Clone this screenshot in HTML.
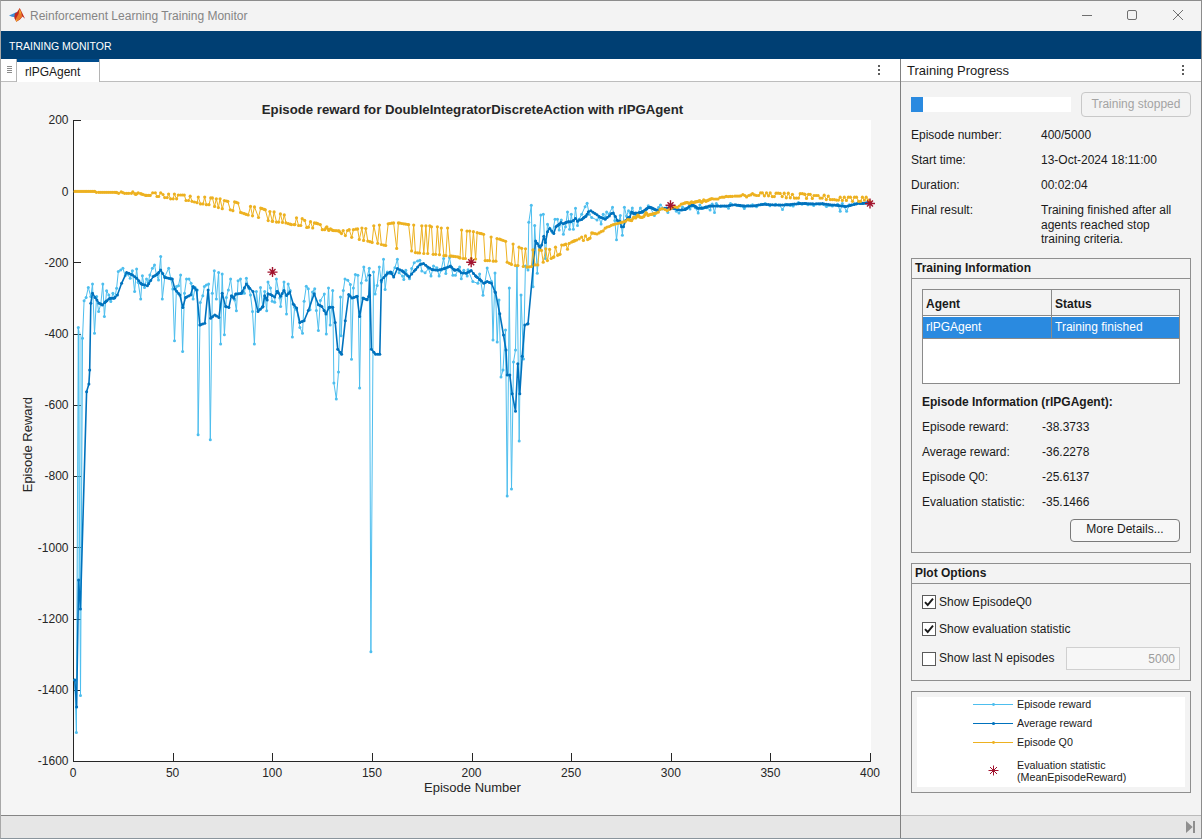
<!DOCTYPE html>
<html><head><meta charset="utf-8">
<style>
*{margin:0;padding:0;box-sizing:border-box}
html,body{width:1202px;height:839px;overflow:hidden;background:#f3f3f3;font-family:"Liberation Sans",sans-serif;color:#1a1a1a}
.a{position:absolute}
.t{position:absolute;white-space:nowrap;font-size:12px;line-height:14px}
</style></head><body>
<!-- window border -->
<div class="a" style="left:0;top:0;width:1202px;height:839px;border:1px solid #8c8c8c;border-left:1px solid #a8a8a8;border-bottom-color:#8a949c"></div>
<!-- title bar -->
<div class="a" style="left:1px;top:1px;width:1200px;height:30px;background:#f3f3f3"></div>
<svg class="a" style="left:6px;top:4px" width="24" height="24" viewBox="0 0 24 24">
<path d="M3 11.4L7.5 9.6L10.5 8L12 9.5L9.5 13.2L6 12.8Z" fill="#3c8fd8"/>
<path d="M8.8 9.5L11 8.2L13.7 4L16 8.5L19 14.8L16.5 12.5L14 15.5L10.3 17.7L8.3 14Z" fill="#c0281e"/>
<path d="M13.7 4.5L15.4 8.5L16.2 12.5L13.5 15.5L10.3 17.7L10 14.5L12.5 10Z" fill="#e8772a"/>
<path d="M13.8 5.5L14.8 9L13.9 10L13.4 7Z" fill="#f2c12e"/>
<path d="M10.3 17.7L9.8 15.8L11.5 15.3Z" fill="#f2c12e"/>
</svg>
<div class="t" style="left:30px;top:9px;font-size:12px;color:#858585">Reinforcement Learning Training Monitor</div>
<!-- window controls -->
<div class="a" style="left:1082px;top:15px;width:10px;height:1px;background:#6f6f6f"></div>
<div class="a" style="left:1127px;top:10px;width:10px;height:10px;border:1px solid #6f6f6f;border-radius:2px"></div>
<svg class="a" style="left:1172px;top:9px" width="12" height="12" viewBox="0 0 12 12"><path d="M1 1L11 11M11 1L1 11" stroke="#6f6f6f" stroke-width="1"/></svg>
<!-- blue toolstrip -->
<div class="a" style="left:1px;top:31px;width:1200px;height:28px;background:#003f73"></div>
<div class="t" style="left:9px;top:39px;font-size:10.5px;color:#fff">TRAINING MONITOR</div>
<!-- tab strip -->
<div class="a" style="left:1px;top:59px;width:899px;height:23px;background:#fff;border-bottom:1px solid #bdbdbd"></div>
<div class="a" style="left:16px;top:59px;width:1px;height:23px;background:#b4b4b4"></div>
<div class="a" style="left:17px;top:59px;width:82px;height:23px;background:#fff;border-top:3px solid #004c8c"></div>
<div class="a" style="left:99px;top:59px;width:1px;height:23px;background:#b4b4b4"></div>
<div class="t" style="left:25px;top:65px;color:#1a1a1a">rlPGAgent</div>
<!-- figure area -->
<div class="a" style="left:1px;top:82px;width:899px;height:733px;background:#f5f5f5"></div>
<svg class="a" style="left:0;top:0" width="900" height="815" viewBox="0 0 900 815">
<rect x="73" y="120" width="798" height="641" fill="#fff"/>
<text x="472.5" y="114" text-anchor="middle" font-family="Liberation Sans" font-weight="700" font-size="13.2" fill="#262626">Episode reward for DoubleIntegratorDiscreteAction with rlPGAgent</text>
<path d="M73.5,120V761.5H871" stroke="#262626" stroke-width="1" fill="none"/>
<path d="M73,120.5h8M73,191.5h8M73,262.5h8M73,334.5h8M73,405.5h8M73,476.5h8M73,547.5h8M73,619.5h8M73,690.5h8M73,761.5h8M73.5,761V753M173.5,761V753M272.5,761V753M372.5,761V753M472.5,761V753M571.5,761V753M671.5,761V753M770.5,761V753M870.5,761V753" stroke="#262626" stroke-width="1" fill="none"/>
<polygon points="77.5,600 78.3,327 82.5,338 81.2,600" fill="#4dbeee" opacity="0.45"/>
<polyline points="74.8,680.0 76.4,732.6 78.3,327.4 80.5,695.5 82.5,338.2 84.1,300.7 86.1,297.4 88.3,287.4 90.8,296.6 92.5,284.1 94.5,333.2 96.6,296.6 98.6,311.5 100.8,304.1 102.8,284.1 104.4,316.5 106.6,290.7 108.8,294.9 110.8,301.6 112.9,293.2 114.9,297.4 116.6,288.3 118.3,271.6 120.7,270.0 122.9,268.3 125.2,275.8 127.4,274.1 130.2,278.3 132.4,270.8 134.6,291.6 136.6,269.1 138.2,282.4 140.7,299.1 142.4,275.8 144.5,287.4 146.5,279.1 148.2,282.4 149.9,274.9 152.4,268.3 154.5,265.0 156.5,274.9 158.5,279.9 160.7,256.6 162.3,299.1 164.8,276.6 168.7,268.3 170.7,278.3 172.8,289.1 174.5,340.7 176.5,286.6 178.5,285.8 180.6,274.9 182.6,351.5 184.5,293.2 186.5,279.1 189.0,279.1 191.1,283.3 193.1,299.1 195.1,287.4 197.3,289.9 198.1,434.8 200.3,302.4 202.8,295.7 204.4,286.6 206.4,284.9 208.6,284.1 210.3,439.8 212.3,293.2 214.3,270.8 216.4,299.1 218.6,272.4 220.6,344.0 222.2,274.1 224.4,334.8 226.4,297.4 228.4,289.9 230.6,279.1 232.7,296.6 234.7,299.9 236.4,310.7 238.1,280.8 240.5,279.1 242.2,293.2 244.4,293.2 246.4,278.3 248.9,288.3 250.5,294.9 252.5,311.5 254.4,344.0 256.4,291.6 258.5,309.9 260.5,287.4 262.7,306.6 264.7,291.6 266.7,310.7 268.0,282.0 270.5,287.9 272.2,301.3 274.7,302.2 276.4,279.0 279.8,298.0 280.6,306.4 284.0,282.0 286.5,313.9 288.2,284.0 290.2,290.4 292.4,337.1 294.6,307.2 296.6,309.7 299.9,327.4 302.5,333.3 304.1,301.3 306.3,286.2 308.3,288.7 310.0,309.7 312.5,292.1 314.7,288.7 316.4,310.6 318.4,330.4 320.4,300.5 324.3,294.1 326.3,334.1 328.5,287.9 330.2,324.9 332.7,290.4 333.9,383.0 336.3,399.0 338.5,372.0 340.5,297.0 341.1,335.8 343.3,290.4 345.0,279.0 347.8,280.3 350.4,284.5 351.5,359.2 353.4,287.9 355.4,274.5 357.9,275.3 359.6,387.9 361.3,282.9 363.8,266.9 366.3,280.3 369.3,268.2 370.9,651.8 373.5,271.9 375.1,294.1 377.2,285.4 379.3,266.9 381.4,282.0 383.5,259.3 385.1,289.6 387.3,271.9 389.8,273.6 392.4,272.8 394.9,267.7 397.4,259.3 399.1,272.8 402.5,276.1 403.8,279.5 405.8,270.3 409.5,278.7 411.7,268.6 414.2,262.7 417.6,261.0 419.8,260.2 421.8,271.1 425.1,272.8 428.5,268.6 431.0,276.1 433.5,266.1 436.9,267.7 439.1,276.1 441.1,270.3 443.6,258.5 445.8,273.6 449.5,257.6 452.9,275.3 455.4,275.3 459.6,266.9 461.3,278.7 463.8,270.3 467.2,276.1 468.0,269.8 472.8,281.6 477.9,283.3 479.6,274.0 483.0,295.2 487.2,268.1 491.5,281.6 493.0,340.0 495.0,273.0 497.2,342.0 499.0,300.0 501.0,377.0 503.0,370.0 505.5,330.0 507.2,496.0 509.3,288.0 511.5,489.0 513.5,362.0 515.5,350.0 517.0,266.0 519.2,441.0 521.0,295.0 523.5,359.0 525.4,266.0 528.0,270.0 528.8,222.2 531.3,205.3 533.0,286.7 534.7,225.6 537.3,273.2 539.0,246.0 540.8,215.0 543.3,214.2 545.4,258.4 547.5,224.2 550.0,228.4 552.5,232.5 555.0,219.2 557.5,219.2 559.2,230.0 561.3,220.0 563.4,234.2 565.5,226.7 567.5,212.1 569.6,229.2 571.3,214.2 573.4,229.2 575.5,208.3 577.5,225.4 579.2,219.2 581.7,214.2 585.1,206.7 587.1,203.3 589.2,214.2 591.7,217.5 597.0,220.0 599.1,217.4 601.1,224.1 603.2,214.2 605.2,218.3 606.6,211.9 609.0,213.9 612.5,207.2 614.8,220.6 616.5,239.8 618.3,223.0 620.3,215.4 622.4,235.2 624.4,207.2 626.5,216.0 628.5,210.7 630.2,213.1 632.3,208.1 634.6,214.2 636.4,215.4 640.4,208.1 642.5,212.5 646.3,209.0 648.3,205.8 650.3,207.8 654.4,215.4 658.5,207.5 660.5,204.9 667.9,212.4 670.8,207.7 673.7,208.3 676.4,211.2 679.0,213.0 682.5,207.1 686.5,208.3 690.0,208.9 692.4,206.0 695.3,207.7 698.2,213.0 699.9,205.1 703.4,208.3 706.9,207.7 710.1,210.0 712.2,203.9 714.5,212.4 716.3,203.6 720.3,206.5 723.8,206.0 728.5,208.3 730.5,203.6 737.3,205.4 740.8,206.0 744.3,208.6 747.8,205.4 752.5,204.8 756.5,206.8 761.2,204.2 765.3,203.6 769.9,205.7 775.8,204.2 779.3,205.1 782.5,209.5 785.7,204.2 790.3,205.4 793.2,206.0 798.5,202.5 802.0,204.2 807.9,204.8 813.7,205.4 819.6,204.2 826.5,206.5 832.4,206.0 837.6,204.2 840.2,211.2 842.3,203.6 846.6,211.2 849.3,204.8 854.5,203.6 860.3,203.1 866.2,202.5 870.2,203.1" fill="none" stroke="#4dbeee" stroke-width="1.0" stroke-linejoin="round"/>
<g fill="#4dbeee"><circle cx="74.8" cy="680.0" r="1.5"/><circle cx="76.4" cy="732.6" r="1.5"/><circle cx="78.3" cy="327.4" r="1.5"/><circle cx="80.5" cy="695.5" r="1.5"/><circle cx="82.5" cy="338.2" r="1.5"/><circle cx="84.1" cy="300.7" r="1.5"/><circle cx="86.1" cy="297.4" r="1.5"/><circle cx="88.3" cy="287.4" r="1.5"/><circle cx="90.8" cy="296.6" r="1.5"/><circle cx="92.5" cy="284.1" r="1.5"/><circle cx="94.5" cy="333.2" r="1.5"/><circle cx="96.6" cy="296.6" r="1.5"/><circle cx="98.6" cy="311.5" r="1.5"/><circle cx="100.8" cy="304.1" r="1.5"/><circle cx="102.8" cy="284.1" r="1.5"/><circle cx="104.4" cy="316.5" r="1.5"/><circle cx="106.6" cy="290.7" r="1.5"/><circle cx="108.8" cy="294.9" r="1.5"/><circle cx="110.8" cy="301.6" r="1.5"/><circle cx="112.9" cy="293.2" r="1.5"/><circle cx="114.9" cy="297.4" r="1.5"/><circle cx="116.6" cy="288.3" r="1.5"/><circle cx="118.3" cy="271.6" r="1.5"/><circle cx="120.7" cy="270.0" r="1.5"/><circle cx="122.9" cy="268.3" r="1.5"/><circle cx="125.2" cy="275.8" r="1.5"/><circle cx="127.4" cy="274.1" r="1.5"/><circle cx="130.2" cy="278.3" r="1.5"/><circle cx="132.4" cy="270.8" r="1.5"/><circle cx="134.6" cy="291.6" r="1.5"/><circle cx="136.6" cy="269.1" r="1.5"/><circle cx="138.2" cy="282.4" r="1.5"/><circle cx="140.7" cy="299.1" r="1.5"/><circle cx="142.4" cy="275.8" r="1.5"/><circle cx="144.5" cy="287.4" r="1.5"/><circle cx="146.5" cy="279.1" r="1.5"/><circle cx="148.2" cy="282.4" r="1.5"/><circle cx="149.9" cy="274.9" r="1.5"/><circle cx="152.4" cy="268.3" r="1.5"/><circle cx="154.5" cy="265.0" r="1.5"/><circle cx="156.5" cy="274.9" r="1.5"/><circle cx="158.5" cy="279.9" r="1.5"/><circle cx="160.7" cy="256.6" r="1.5"/><circle cx="162.3" cy="299.1" r="1.5"/><circle cx="164.8" cy="276.6" r="1.5"/><circle cx="168.7" cy="268.3" r="1.5"/><circle cx="170.7" cy="278.3" r="1.5"/><circle cx="172.8" cy="289.1" r="1.5"/><circle cx="174.5" cy="340.7" r="1.5"/><circle cx="176.5" cy="286.6" r="1.5"/><circle cx="178.5" cy="285.8" r="1.5"/><circle cx="180.6" cy="274.9" r="1.5"/><circle cx="182.6" cy="351.5" r="1.5"/><circle cx="184.5" cy="293.2" r="1.5"/><circle cx="186.5" cy="279.1" r="1.5"/><circle cx="189.0" cy="279.1" r="1.5"/><circle cx="191.1" cy="283.3" r="1.5"/><circle cx="193.1" cy="299.1" r="1.5"/><circle cx="195.1" cy="287.4" r="1.5"/><circle cx="197.3" cy="289.9" r="1.5"/><circle cx="198.1" cy="434.8" r="1.5"/><circle cx="200.3" cy="302.4" r="1.5"/><circle cx="202.8" cy="295.7" r="1.5"/><circle cx="204.4" cy="286.6" r="1.5"/><circle cx="206.4" cy="284.9" r="1.5"/><circle cx="208.6" cy="284.1" r="1.5"/><circle cx="210.3" cy="439.8" r="1.5"/><circle cx="212.3" cy="293.2" r="1.5"/><circle cx="214.3" cy="270.8" r="1.5"/><circle cx="216.4" cy="299.1" r="1.5"/><circle cx="218.6" cy="272.4" r="1.5"/><circle cx="220.6" cy="344.0" r="1.5"/><circle cx="222.2" cy="274.1" r="1.5"/><circle cx="224.4" cy="334.8" r="1.5"/><circle cx="226.4" cy="297.4" r="1.5"/><circle cx="228.4" cy="289.9" r="1.5"/><circle cx="230.6" cy="279.1" r="1.5"/><circle cx="232.7" cy="296.6" r="1.5"/><circle cx="234.7" cy="299.9" r="1.5"/><circle cx="236.4" cy="310.7" r="1.5"/><circle cx="238.1" cy="280.8" r="1.5"/><circle cx="240.5" cy="279.1" r="1.5"/><circle cx="242.2" cy="293.2" r="1.5"/><circle cx="244.4" cy="293.2" r="1.5"/><circle cx="246.4" cy="278.3" r="1.5"/><circle cx="248.9" cy="288.3" r="1.5"/><circle cx="250.5" cy="294.9" r="1.5"/><circle cx="252.5" cy="311.5" r="1.5"/><circle cx="254.4" cy="344.0" r="1.5"/><circle cx="256.4" cy="291.6" r="1.5"/><circle cx="258.5" cy="309.9" r="1.5"/><circle cx="260.5" cy="287.4" r="1.5"/><circle cx="262.7" cy="306.6" r="1.5"/><circle cx="264.7" cy="291.6" r="1.5"/><circle cx="266.7" cy="310.7" r="1.5"/><circle cx="268.0" cy="282.0" r="1.5"/><circle cx="270.5" cy="287.9" r="1.5"/><circle cx="272.2" cy="301.3" r="1.5"/><circle cx="274.7" cy="302.2" r="1.5"/><circle cx="276.4" cy="279.0" r="1.5"/><circle cx="279.8" cy="298.0" r="1.5"/><circle cx="280.6" cy="306.4" r="1.5"/><circle cx="284.0" cy="282.0" r="1.5"/><circle cx="286.5" cy="313.9" r="1.5"/><circle cx="288.2" cy="284.0" r="1.5"/><circle cx="290.2" cy="290.4" r="1.5"/><circle cx="292.4" cy="337.1" r="1.5"/><circle cx="294.6" cy="307.2" r="1.5"/><circle cx="296.6" cy="309.7" r="1.5"/><circle cx="299.9" cy="327.4" r="1.5"/><circle cx="302.5" cy="333.3" r="1.5"/><circle cx="304.1" cy="301.3" r="1.5"/><circle cx="306.3" cy="286.2" r="1.5"/><circle cx="308.3" cy="288.7" r="1.5"/><circle cx="310.0" cy="309.7" r="1.5"/><circle cx="312.5" cy="292.1" r="1.5"/><circle cx="314.7" cy="288.7" r="1.5"/><circle cx="316.4" cy="310.6" r="1.5"/><circle cx="318.4" cy="330.4" r="1.5"/><circle cx="320.4" cy="300.5" r="1.5"/><circle cx="324.3" cy="294.1" r="1.5"/><circle cx="326.3" cy="334.1" r="1.5"/><circle cx="328.5" cy="287.9" r="1.5"/><circle cx="330.2" cy="324.9" r="1.5"/><circle cx="332.7" cy="290.4" r="1.5"/><circle cx="333.9" cy="383.0" r="1.5"/><circle cx="336.3" cy="399.0" r="1.5"/><circle cx="338.5" cy="372.0" r="1.5"/><circle cx="340.5" cy="297.0" r="1.5"/><circle cx="341.1" cy="335.8" r="1.5"/><circle cx="343.3" cy="290.4" r="1.5"/><circle cx="345.0" cy="279.0" r="1.5"/><circle cx="347.8" cy="280.3" r="1.5"/><circle cx="350.4" cy="284.5" r="1.5"/><circle cx="351.5" cy="359.2" r="1.5"/><circle cx="353.4" cy="287.9" r="1.5"/><circle cx="355.4" cy="274.5" r="1.5"/><circle cx="357.9" cy="275.3" r="1.5"/><circle cx="359.6" cy="387.9" r="1.5"/><circle cx="361.3" cy="282.9" r="1.5"/><circle cx="363.8" cy="266.9" r="1.5"/><circle cx="366.3" cy="280.3" r="1.5"/><circle cx="369.3" cy="268.2" r="1.5"/><circle cx="370.9" cy="651.8" r="1.5"/><circle cx="373.5" cy="271.9" r="1.5"/><circle cx="375.1" cy="294.1" r="1.5"/><circle cx="377.2" cy="285.4" r="1.5"/><circle cx="379.3" cy="266.9" r="1.5"/><circle cx="381.4" cy="282.0" r="1.5"/><circle cx="383.5" cy="259.3" r="1.5"/><circle cx="385.1" cy="289.6" r="1.5"/><circle cx="387.3" cy="271.9" r="1.5"/><circle cx="389.8" cy="273.6" r="1.5"/><circle cx="392.4" cy="272.8" r="1.5"/><circle cx="394.9" cy="267.7" r="1.5"/><circle cx="397.4" cy="259.3" r="1.5"/><circle cx="399.1" cy="272.8" r="1.5"/><circle cx="402.5" cy="276.1" r="1.5"/><circle cx="403.8" cy="279.5" r="1.5"/><circle cx="405.8" cy="270.3" r="1.5"/><circle cx="409.5" cy="278.7" r="1.5"/><circle cx="411.7" cy="268.6" r="1.5"/><circle cx="414.2" cy="262.7" r="1.5"/><circle cx="417.6" cy="261.0" r="1.5"/><circle cx="419.8" cy="260.2" r="1.5"/><circle cx="421.8" cy="271.1" r="1.5"/><circle cx="425.1" cy="272.8" r="1.5"/><circle cx="428.5" cy="268.6" r="1.5"/><circle cx="431.0" cy="276.1" r="1.5"/><circle cx="433.5" cy="266.1" r="1.5"/><circle cx="436.9" cy="267.7" r="1.5"/><circle cx="439.1" cy="276.1" r="1.5"/><circle cx="441.1" cy="270.3" r="1.5"/><circle cx="443.6" cy="258.5" r="1.5"/><circle cx="445.8" cy="273.6" r="1.5"/><circle cx="449.5" cy="257.6" r="1.5"/><circle cx="452.9" cy="275.3" r="1.5"/><circle cx="455.4" cy="275.3" r="1.5"/><circle cx="459.6" cy="266.9" r="1.5"/><circle cx="461.3" cy="278.7" r="1.5"/><circle cx="463.8" cy="270.3" r="1.5"/><circle cx="467.2" cy="276.1" r="1.5"/><circle cx="468.0" cy="269.8" r="1.5"/><circle cx="472.8" cy="281.6" r="1.5"/><circle cx="477.9" cy="283.3" r="1.5"/><circle cx="479.6" cy="274.0" r="1.5"/><circle cx="483.0" cy="295.2" r="1.5"/><circle cx="487.2" cy="268.1" r="1.5"/><circle cx="491.5" cy="281.6" r="1.5"/><circle cx="493.0" cy="340.0" r="1.5"/><circle cx="495.0" cy="273.0" r="1.5"/><circle cx="497.2" cy="342.0" r="1.5"/><circle cx="499.0" cy="300.0" r="1.5"/><circle cx="501.0" cy="377.0" r="1.5"/><circle cx="503.0" cy="370.0" r="1.5"/><circle cx="505.5" cy="330.0" r="1.5"/><circle cx="507.2" cy="496.0" r="1.5"/><circle cx="509.3" cy="288.0" r="1.5"/><circle cx="511.5" cy="489.0" r="1.5"/><circle cx="513.5" cy="362.0" r="1.5"/><circle cx="515.5" cy="350.0" r="1.5"/><circle cx="517.0" cy="266.0" r="1.5"/><circle cx="519.2" cy="441.0" r="1.5"/><circle cx="521.0" cy="295.0" r="1.5"/><circle cx="523.5" cy="359.0" r="1.5"/><circle cx="525.4" cy="266.0" r="1.5"/><circle cx="528.0" cy="270.0" r="1.5"/><circle cx="528.8" cy="222.2" r="1.5"/><circle cx="531.3" cy="205.3" r="1.5"/><circle cx="533.0" cy="286.7" r="1.5"/><circle cx="534.7" cy="225.6" r="1.5"/><circle cx="537.3" cy="273.2" r="1.5"/><circle cx="539.0" cy="246.0" r="1.5"/><circle cx="540.8" cy="215.0" r="1.5"/><circle cx="543.3" cy="214.2" r="1.5"/><circle cx="545.4" cy="258.4" r="1.5"/><circle cx="547.5" cy="224.2" r="1.5"/><circle cx="550.0" cy="228.4" r="1.5"/><circle cx="552.5" cy="232.5" r="1.5"/><circle cx="555.0" cy="219.2" r="1.5"/><circle cx="557.5" cy="219.2" r="1.5"/><circle cx="559.2" cy="230.0" r="1.5"/><circle cx="561.3" cy="220.0" r="1.5"/><circle cx="563.4" cy="234.2" r="1.5"/><circle cx="565.5" cy="226.7" r="1.5"/><circle cx="567.5" cy="212.1" r="1.5"/><circle cx="569.6" cy="229.2" r="1.5"/><circle cx="571.3" cy="214.2" r="1.5"/><circle cx="573.4" cy="229.2" r="1.5"/><circle cx="575.5" cy="208.3" r="1.5"/><circle cx="577.5" cy="225.4" r="1.5"/><circle cx="579.2" cy="219.2" r="1.5"/><circle cx="581.7" cy="214.2" r="1.5"/><circle cx="585.1" cy="206.7" r="1.5"/><circle cx="587.1" cy="203.3" r="1.5"/><circle cx="589.2" cy="214.2" r="1.5"/><circle cx="591.7" cy="217.5" r="1.5"/><circle cx="597.0" cy="220.0" r="1.5"/><circle cx="599.1" cy="217.4" r="1.5"/><circle cx="601.1" cy="224.1" r="1.5"/><circle cx="603.2" cy="214.2" r="1.5"/><circle cx="605.2" cy="218.3" r="1.5"/><circle cx="606.6" cy="211.9" r="1.5"/><circle cx="609.0" cy="213.9" r="1.5"/><circle cx="612.5" cy="207.2" r="1.5"/><circle cx="614.8" cy="220.6" r="1.5"/><circle cx="616.5" cy="239.8" r="1.5"/><circle cx="618.3" cy="223.0" r="1.5"/><circle cx="620.3" cy="215.4" r="1.5"/><circle cx="622.4" cy="235.2" r="1.5"/><circle cx="624.4" cy="207.2" r="1.5"/><circle cx="626.5" cy="216.0" r="1.5"/><circle cx="628.5" cy="210.7" r="1.5"/><circle cx="630.2" cy="213.1" r="1.5"/><circle cx="632.3" cy="208.1" r="1.5"/><circle cx="634.6" cy="214.2" r="1.5"/><circle cx="636.4" cy="215.4" r="1.5"/><circle cx="640.4" cy="208.1" r="1.5"/><circle cx="642.5" cy="212.5" r="1.5"/><circle cx="646.3" cy="209.0" r="1.5"/><circle cx="648.3" cy="205.8" r="1.5"/><circle cx="650.3" cy="207.8" r="1.5"/><circle cx="654.4" cy="215.4" r="1.5"/><circle cx="658.5" cy="207.5" r="1.5"/><circle cx="660.5" cy="204.9" r="1.5"/><circle cx="667.9" cy="212.4" r="1.5"/><circle cx="670.8" cy="207.7" r="1.5"/><circle cx="673.7" cy="208.3" r="1.5"/><circle cx="676.4" cy="211.2" r="1.5"/><circle cx="679.0" cy="213.0" r="1.5"/><circle cx="682.5" cy="207.1" r="1.5"/><circle cx="686.5" cy="208.3" r="1.5"/><circle cx="690.0" cy="208.9" r="1.5"/><circle cx="692.4" cy="206.0" r="1.5"/><circle cx="695.3" cy="207.7" r="1.5"/><circle cx="698.2" cy="213.0" r="1.5"/><circle cx="699.9" cy="205.1" r="1.5"/><circle cx="703.4" cy="208.3" r="1.5"/><circle cx="706.9" cy="207.7" r="1.5"/><circle cx="710.1" cy="210.0" r="1.5"/><circle cx="712.2" cy="203.9" r="1.5"/><circle cx="714.5" cy="212.4" r="1.5"/><circle cx="716.3" cy="203.6" r="1.5"/><circle cx="720.3" cy="206.5" r="1.5"/><circle cx="723.8" cy="206.0" r="1.5"/><circle cx="728.5" cy="208.3" r="1.5"/><circle cx="730.5" cy="203.6" r="1.5"/><circle cx="737.3" cy="205.4" r="1.5"/><circle cx="740.8" cy="206.0" r="1.5"/><circle cx="744.3" cy="208.6" r="1.5"/><circle cx="747.8" cy="205.4" r="1.5"/><circle cx="752.5" cy="204.8" r="1.5"/><circle cx="756.5" cy="206.8" r="1.5"/><circle cx="761.2" cy="204.2" r="1.5"/><circle cx="765.3" cy="203.6" r="1.5"/><circle cx="769.9" cy="205.7" r="1.5"/><circle cx="775.8" cy="204.2" r="1.5"/><circle cx="779.3" cy="205.1" r="1.5"/><circle cx="782.5" cy="209.5" r="1.5"/><circle cx="785.7" cy="204.2" r="1.5"/><circle cx="790.3" cy="205.4" r="1.5"/><circle cx="793.2" cy="206.0" r="1.5"/><circle cx="798.5" cy="202.5" r="1.5"/><circle cx="802.0" cy="204.2" r="1.5"/><circle cx="807.9" cy="204.8" r="1.5"/><circle cx="813.7" cy="205.4" r="1.5"/><circle cx="819.6" cy="204.2" r="1.5"/><circle cx="826.5" cy="206.5" r="1.5"/><circle cx="832.4" cy="206.0" r="1.5"/><circle cx="837.6" cy="204.2" r="1.5"/><circle cx="840.2" cy="211.2" r="1.5"/><circle cx="842.3" cy="203.6" r="1.5"/><circle cx="846.6" cy="211.2" r="1.5"/><circle cx="849.3" cy="204.8" r="1.5"/><circle cx="854.5" cy="203.6" r="1.5"/><circle cx="860.3" cy="203.1" r="1.5"/><circle cx="866.2" cy="202.5" r="1.5"/><circle cx="870.2" cy="203.1" r="1.5"/></g>
<polyline points="74.8,680.0 76.6,707.0 78.6,580.0 80.4,609.0 86.6,391.7 88.9,384.0 89.7,370.0 90.8,303.2 92.5,293.2 95.0,297.4 99.1,303.2 102.4,304.9 105.8,301.6 109.9,298.2 114.1,298.2 117.4,294.9 121.6,283.3 126.6,272.4 132.4,274.9 136.6,278.3 141.5,284.1 147.4,285.8 153.2,276.6 157.4,274.1 160.7,270.0 164.8,277.4 172.3,279.1 174.8,289.1 179.8,294.9 182.8,307.4 185.6,297.4 190.6,294.9 193.1,286.6 196.5,289.9 199.8,324.9 204.8,323.2 208.1,289.9 210.6,318.2 214.8,314.9 218.9,317.4 222.2,293.2 225.6,306.6 228.9,307.4 231.4,295.7 233.9,298.2 235.6,294.1 241.4,293.2 246.4,284.1 249.7,288.3 253.0,291.6 258.0,311.5 263.0,306.6 264.7,295.7 267.2,299.9 268.0,293.8 270.5,294.6 274.7,297.1 277.2,291.3 280.6,296.3 284.0,290.4 286.5,295.5 289.8,292.1 293.2,303.9 296.6,308.1 299.9,322.4 304.1,320.7 308.3,310.6 314.2,293.8 318.4,304.7 321.8,306.4 326.0,313.9 329.3,307.2 332.7,307.2 335.2,322.4 337.7,349.2 341.6,354.3 345.3,320.7 348.7,294.6 352.0,298.0 357.1,296.3 359.6,316.5 363.0,298.0 367.2,299.7 368.8,296.3 369.7,275.3 371.4,349.2 375.6,354.3 379.8,354.3 381.4,280.3 387.3,273.6 390.7,271.9 393.7,277.0 397.4,268.6 402.5,271.1 409.2,277.0 414.2,271.1 420.1,264.4 423.5,263.5 427.7,266.9 431.9,269.4 437.7,270.3 444.5,268.6 450.4,266.1 454.6,270.3 457.9,269.4 461.3,272.8 466.0,273.2 471.1,270.6 476.2,276.6 480.4,280.0 483.8,283.3 487.2,281.6 491.5,283.3 494.9,291.8 495.5,292.5 499.8,313.8 503.5,335.0 506.0,350.0 507.2,375.0 509.8,375.0 512.2,393.8 515.5,411.2 517.8,363.8 519.8,393.8 522.2,356.2 524.8,325.0 528.0,323.8 535.6,240.9 539.0,246.0 540.0,249.2 541.7,245.0 543.8,236.3 545.4,242.5 547.5,231.7 549.6,228.4 551.7,230.9 553.8,233.4 555.9,226.7 558.4,225.0 560.9,222.5 563.4,223.8 565.9,222.5 568.4,221.7 570.9,221.7 573.4,220.4 575.5,218.4 577.5,221.3 579.6,220.0 581.7,219.6 583.8,217.5 585.9,216.3 588.4,211.7 590.9,210.8 597.0,214.8 599.1,216.5 601.1,217.4 603.2,218.3 605.2,219.2 607.2,217.4 609.3,216.0 611.3,213.6 613.3,213.1 615.4,216.5 617.4,220.6 619.5,220.9 621.5,226.7 623.5,226.7 625.6,220.6 627.6,218.0 629.7,217.1 631.7,211.9 633.7,213.6 635.8,213.1 637.8,213.3 639.8,212.5 641.9,211.9 643.9,211.0 646.0,209.3 648.0,207.8 650.0,207.2 652.1,208.1 654.1,209.0 656.2,210.1 658.2,210.4 660.2,209.0 662.3,208.7 665.0,208.3 669.1,207.7 673.2,208.3 677.2,209.5 681.3,210.0 685.4,209.5 689.5,206.3 691.5,204.8 693.5,205.4 695.6,206.5 697.6,208.3 701.7,208.3 705.8,207.1 709.8,206.0 713.9,206.0 718.0,206.0 722.1,206.0 726.2,206.0 730.2,205.4 735.0,204.8 739.7,205.4 743.7,206.0 752.5,206.0 764.1,204.2 775.8,205.1 787.4,204.8 799.1,203.6 805.0,203.6 813.7,203.9 822.5,203.6 828.3,204.5 834.1,205.1 839.9,205.7 845.8,206.5 851.6,205.1 857.4,203.6 863.2,203.3 870.2,203.1" fill="none" stroke="#0072bd" stroke-width="1.6" stroke-linejoin="round"/>
<g fill="#0072bd"><circle cx="74.8" cy="680.0" r="1.5"/><circle cx="76.6" cy="707.0" r="1.5"/><circle cx="78.6" cy="580.0" r="1.5"/><circle cx="80.4" cy="609.0" r="1.5"/><circle cx="86.6" cy="391.7" r="1.5"/><circle cx="88.9" cy="384.0" r="1.5"/><circle cx="89.7" cy="370.0" r="1.5"/><circle cx="90.8" cy="303.2" r="1.5"/><circle cx="92.5" cy="293.2" r="1.5"/><circle cx="95.0" cy="297.4" r="1.5"/><circle cx="99.1" cy="303.2" r="1.5"/><circle cx="102.4" cy="304.9" r="1.5"/><circle cx="105.8" cy="301.6" r="1.5"/><circle cx="109.9" cy="298.2" r="1.5"/><circle cx="114.1" cy="298.2" r="1.5"/><circle cx="117.4" cy="294.9" r="1.5"/><circle cx="121.6" cy="283.3" r="1.5"/><circle cx="126.6" cy="272.4" r="1.5"/><circle cx="132.4" cy="274.9" r="1.5"/><circle cx="136.6" cy="278.3" r="1.5"/><circle cx="141.5" cy="284.1" r="1.5"/><circle cx="147.4" cy="285.8" r="1.5"/><circle cx="153.2" cy="276.6" r="1.5"/><circle cx="157.4" cy="274.1" r="1.5"/><circle cx="160.7" cy="270.0" r="1.5"/><circle cx="164.8" cy="277.4" r="1.5"/><circle cx="172.3" cy="279.1" r="1.5"/><circle cx="174.8" cy="289.1" r="1.5"/><circle cx="179.8" cy="294.9" r="1.5"/><circle cx="182.8" cy="307.4" r="1.5"/><circle cx="185.6" cy="297.4" r="1.5"/><circle cx="190.6" cy="294.9" r="1.5"/><circle cx="193.1" cy="286.6" r="1.5"/><circle cx="196.5" cy="289.9" r="1.5"/><circle cx="199.8" cy="324.9" r="1.5"/><circle cx="204.8" cy="323.2" r="1.5"/><circle cx="208.1" cy="289.9" r="1.5"/><circle cx="210.6" cy="318.2" r="1.5"/><circle cx="214.8" cy="314.9" r="1.5"/><circle cx="218.9" cy="317.4" r="1.5"/><circle cx="222.2" cy="293.2" r="1.5"/><circle cx="225.6" cy="306.6" r="1.5"/><circle cx="228.9" cy="307.4" r="1.5"/><circle cx="231.4" cy="295.7" r="1.5"/><circle cx="233.9" cy="298.2" r="1.5"/><circle cx="235.6" cy="294.1" r="1.5"/><circle cx="241.4" cy="293.2" r="1.5"/><circle cx="246.4" cy="284.1" r="1.5"/><circle cx="249.7" cy="288.3" r="1.5"/><circle cx="253.0" cy="291.6" r="1.5"/><circle cx="258.0" cy="311.5" r="1.5"/><circle cx="263.0" cy="306.6" r="1.5"/><circle cx="264.7" cy="295.7" r="1.5"/><circle cx="267.2" cy="299.9" r="1.5"/><circle cx="268.0" cy="293.8" r="1.5"/><circle cx="270.5" cy="294.6" r="1.5"/><circle cx="274.7" cy="297.1" r="1.5"/><circle cx="277.2" cy="291.3" r="1.5"/><circle cx="280.6" cy="296.3" r="1.5"/><circle cx="284.0" cy="290.4" r="1.5"/><circle cx="286.5" cy="295.5" r="1.5"/><circle cx="289.8" cy="292.1" r="1.5"/><circle cx="293.2" cy="303.9" r="1.5"/><circle cx="296.6" cy="308.1" r="1.5"/><circle cx="299.9" cy="322.4" r="1.5"/><circle cx="304.1" cy="320.7" r="1.5"/><circle cx="308.3" cy="310.6" r="1.5"/><circle cx="314.2" cy="293.8" r="1.5"/><circle cx="318.4" cy="304.7" r="1.5"/><circle cx="321.8" cy="306.4" r="1.5"/><circle cx="326.0" cy="313.9" r="1.5"/><circle cx="329.3" cy="307.2" r="1.5"/><circle cx="332.7" cy="307.2" r="1.5"/><circle cx="335.2" cy="322.4" r="1.5"/><circle cx="337.7" cy="349.2" r="1.5"/><circle cx="341.6" cy="354.3" r="1.5"/><circle cx="345.3" cy="320.7" r="1.5"/><circle cx="348.7" cy="294.6" r="1.5"/><circle cx="352.0" cy="298.0" r="1.5"/><circle cx="357.1" cy="296.3" r="1.5"/><circle cx="359.6" cy="316.5" r="1.5"/><circle cx="363.0" cy="298.0" r="1.5"/><circle cx="367.2" cy="299.7" r="1.5"/><circle cx="368.8" cy="296.3" r="1.5"/><circle cx="369.7" cy="275.3" r="1.5"/><circle cx="371.4" cy="349.2" r="1.5"/><circle cx="375.6" cy="354.3" r="1.5"/><circle cx="379.8" cy="354.3" r="1.5"/><circle cx="381.4" cy="280.3" r="1.5"/><circle cx="387.3" cy="273.6" r="1.5"/><circle cx="390.7" cy="271.9" r="1.5"/><circle cx="393.7" cy="277.0" r="1.5"/><circle cx="397.4" cy="268.6" r="1.5"/><circle cx="402.5" cy="271.1" r="1.5"/><circle cx="409.2" cy="277.0" r="1.5"/><circle cx="414.2" cy="271.1" r="1.5"/><circle cx="420.1" cy="264.4" r="1.5"/><circle cx="423.5" cy="263.5" r="1.5"/><circle cx="427.7" cy="266.9" r="1.5"/><circle cx="431.9" cy="269.4" r="1.5"/><circle cx="437.7" cy="270.3" r="1.5"/><circle cx="444.5" cy="268.6" r="1.5"/><circle cx="450.4" cy="266.1" r="1.5"/><circle cx="454.6" cy="270.3" r="1.5"/><circle cx="457.9" cy="269.4" r="1.5"/><circle cx="461.3" cy="272.8" r="1.5"/><circle cx="466.0" cy="273.2" r="1.5"/><circle cx="471.1" cy="270.6" r="1.5"/><circle cx="476.2" cy="276.6" r="1.5"/><circle cx="480.4" cy="280.0" r="1.5"/><circle cx="483.8" cy="283.3" r="1.5"/><circle cx="487.2" cy="281.6" r="1.5"/><circle cx="491.5" cy="283.3" r="1.5"/><circle cx="494.9" cy="291.8" r="1.5"/><circle cx="495.5" cy="292.5" r="1.5"/><circle cx="499.8" cy="313.8" r="1.5"/><circle cx="503.5" cy="335.0" r="1.5"/><circle cx="506.0" cy="350.0" r="1.5"/><circle cx="507.2" cy="375.0" r="1.5"/><circle cx="509.8" cy="375.0" r="1.5"/><circle cx="512.2" cy="393.8" r="1.5"/><circle cx="515.5" cy="411.2" r="1.5"/><circle cx="517.8" cy="363.8" r="1.5"/><circle cx="519.8" cy="393.8" r="1.5"/><circle cx="522.2" cy="356.2" r="1.5"/><circle cx="524.8" cy="325.0" r="1.5"/><circle cx="528.0" cy="323.8" r="1.5"/><circle cx="535.6" cy="240.9" r="1.5"/><circle cx="539.0" cy="246.0" r="1.5"/><circle cx="540.0" cy="249.2" r="1.5"/><circle cx="541.7" cy="245.0" r="1.5"/><circle cx="543.8" cy="236.3" r="1.5"/><circle cx="545.4" cy="242.5" r="1.5"/><circle cx="547.5" cy="231.7" r="1.5"/><circle cx="549.6" cy="228.4" r="1.5"/><circle cx="551.7" cy="230.9" r="1.5"/><circle cx="553.8" cy="233.4" r="1.5"/><circle cx="555.9" cy="226.7" r="1.5"/><circle cx="558.4" cy="225.0" r="1.5"/><circle cx="560.9" cy="222.5" r="1.5"/><circle cx="563.4" cy="223.8" r="1.5"/><circle cx="565.9" cy="222.5" r="1.5"/><circle cx="568.4" cy="221.7" r="1.5"/><circle cx="570.9" cy="221.7" r="1.5"/><circle cx="573.4" cy="220.4" r="1.5"/><circle cx="575.5" cy="218.4" r="1.5"/><circle cx="577.5" cy="221.3" r="1.5"/><circle cx="579.6" cy="220.0" r="1.5"/><circle cx="581.7" cy="219.6" r="1.5"/><circle cx="583.8" cy="217.5" r="1.5"/><circle cx="585.9" cy="216.3" r="1.5"/><circle cx="588.4" cy="211.7" r="1.5"/><circle cx="590.9" cy="210.8" r="1.5"/><circle cx="597.0" cy="214.8" r="1.5"/><circle cx="599.1" cy="216.5" r="1.5"/><circle cx="601.1" cy="217.4" r="1.5"/><circle cx="603.2" cy="218.3" r="1.5"/><circle cx="605.2" cy="219.2" r="1.5"/><circle cx="607.2" cy="217.4" r="1.5"/><circle cx="609.3" cy="216.0" r="1.5"/><circle cx="611.3" cy="213.6" r="1.5"/><circle cx="613.3" cy="213.1" r="1.5"/><circle cx="615.4" cy="216.5" r="1.5"/><circle cx="617.4" cy="220.6" r="1.5"/><circle cx="619.5" cy="220.9" r="1.5"/><circle cx="621.5" cy="226.7" r="1.5"/><circle cx="623.5" cy="226.7" r="1.5"/><circle cx="625.6" cy="220.6" r="1.5"/><circle cx="627.6" cy="218.0" r="1.5"/><circle cx="629.7" cy="217.1" r="1.5"/><circle cx="631.7" cy="211.9" r="1.5"/><circle cx="633.7" cy="213.6" r="1.5"/><circle cx="635.8" cy="213.1" r="1.5"/><circle cx="637.8" cy="213.3" r="1.5"/><circle cx="639.8" cy="212.5" r="1.5"/><circle cx="641.9" cy="211.9" r="1.5"/><circle cx="643.9" cy="211.0" r="1.5"/><circle cx="646.0" cy="209.3" r="1.5"/><circle cx="648.0" cy="207.8" r="1.5"/><circle cx="650.0" cy="207.2" r="1.5"/><circle cx="652.1" cy="208.1" r="1.5"/><circle cx="654.1" cy="209.0" r="1.5"/><circle cx="656.2" cy="210.1" r="1.5"/><circle cx="658.2" cy="210.4" r="1.5"/><circle cx="660.2" cy="209.0" r="1.5"/><circle cx="662.3" cy="208.7" r="1.5"/><circle cx="665.0" cy="208.3" r="1.5"/><circle cx="669.1" cy="207.7" r="1.5"/><circle cx="673.2" cy="208.3" r="1.5"/><circle cx="677.2" cy="209.5" r="1.5"/><circle cx="681.3" cy="210.0" r="1.5"/><circle cx="685.4" cy="209.5" r="1.5"/><circle cx="689.5" cy="206.3" r="1.5"/><circle cx="691.5" cy="204.8" r="1.5"/><circle cx="693.5" cy="205.4" r="1.5"/><circle cx="695.6" cy="206.5" r="1.5"/><circle cx="697.6" cy="208.3" r="1.5"/><circle cx="701.7" cy="208.3" r="1.5"/><circle cx="705.8" cy="207.1" r="1.5"/><circle cx="709.8" cy="206.0" r="1.5"/><circle cx="713.9" cy="206.0" r="1.5"/><circle cx="718.0" cy="206.0" r="1.5"/><circle cx="722.1" cy="206.0" r="1.5"/><circle cx="726.2" cy="206.0" r="1.5"/><circle cx="730.2" cy="205.4" r="1.5"/><circle cx="735.0" cy="204.8" r="1.5"/><circle cx="739.7" cy="205.4" r="1.5"/><circle cx="743.7" cy="206.0" r="1.5"/><circle cx="752.5" cy="206.0" r="1.5"/><circle cx="764.1" cy="204.2" r="1.5"/><circle cx="775.8" cy="205.1" r="1.5"/><circle cx="787.4" cy="204.8" r="1.5"/><circle cx="799.1" cy="203.6" r="1.5"/><circle cx="805.0" cy="203.6" r="1.5"/><circle cx="813.7" cy="203.9" r="1.5"/><circle cx="822.5" cy="203.6" r="1.5"/><circle cx="828.3" cy="204.5" r="1.5"/><circle cx="834.1" cy="205.1" r="1.5"/><circle cx="839.9" cy="205.7" r="1.5"/><circle cx="845.8" cy="206.5" r="1.5"/><circle cx="851.6" cy="205.1" r="1.5"/><circle cx="857.4" cy="203.6" r="1.5"/><circle cx="863.2" cy="203.3" r="1.5"/><circle cx="870.2" cy="203.1" r="1.5"/><circle cx="96.9" cy="300.1" r="1.5"/><circle cx="100.9" cy="304.1" r="1.5"/><circle cx="104.9" cy="302.5" r="1.5"/><circle cx="106.9" cy="300.7" r="1.5"/><circle cx="108.9" cy="299.1" r="1.5"/><circle cx="110.9" cy="298.2" r="1.5"/><circle cx="112.8" cy="298.2" r="1.5"/><circle cx="114.8" cy="297.5" r="1.5"/><circle cx="128.8" cy="273.3" r="1.5"/><circle cx="130.8" cy="274.2" r="1.5"/><circle cx="134.8" cy="276.8" r="1.5"/><circle cx="138.8" cy="280.8" r="1.5"/><circle cx="140.7" cy="283.2" r="1.5"/><circle cx="142.7" cy="284.5" r="1.5"/><circle cx="144.7" cy="285.0" r="1.5"/><circle cx="148.7" cy="283.7" r="1.5"/><circle cx="150.7" cy="280.6" r="1.5"/><circle cx="154.7" cy="275.7" r="1.5"/><circle cx="156.7" cy="274.5" r="1.5"/><circle cx="158.7" cy="272.5" r="1.5"/><circle cx="162.7" cy="273.5" r="1.5"/><circle cx="166.6" cy="277.8" r="1.5"/><circle cx="168.6" cy="278.3" r="1.5"/><circle cx="170.6" cy="278.7" r="1.5"/><circle cx="176.6" cy="291.2" r="1.5"/><circle cx="178.6" cy="293.5" r="1.5"/><circle cx="186.6" cy="296.9" r="1.5"/><circle cx="188.6" cy="295.9" r="1.5"/><circle cx="194.5" cy="288.0" r="1.5"/><circle cx="200.5" cy="324.7" r="1.5"/><circle cx="202.5" cy="324.0" r="1.5"/><circle cx="212.5" cy="316.7" r="1.5"/><circle cx="216.5" cy="315.9" r="1.5"/><circle cx="226.4" cy="306.8" r="1.5"/><circle cx="232.4" cy="296.7" r="1.5"/><circle cx="236.4" cy="294.0" r="1.5"/><circle cx="238.4" cy="293.7" r="1.5"/><circle cx="240.4" cy="293.4" r="1.5"/><circle cx="242.4" cy="291.4" r="1.5"/><circle cx="244.4" cy="287.8" r="1.5"/><circle cx="248.3" cy="286.6" r="1.5"/><circle cx="260.3" cy="309.3" r="1.5"/><circle cx="262.3" cy="307.3" r="1.5"/><circle cx="266.3" cy="298.3" r="1.5"/><circle cx="272.2" cy="295.6" r="1.5"/><circle cx="278.2" cy="292.8" r="1.5"/><circle cx="282.2" cy="293.5" r="1.5"/><circle cx="288.2" cy="293.8" r="1.5"/><circle cx="294.2" cy="305.1" r="1.5"/><circle cx="302.1" cy="321.5" r="1.5"/><circle cx="320.1" cy="305.5" r="1.5"/><circle cx="324.1" cy="310.4" r="1.5"/><circle cx="330.0" cy="307.2" r="1.5"/><circle cx="340.0" cy="352.2" r="1.5"/><circle cx="350.0" cy="295.9" r="1.5"/><circle cx="353.9" cy="297.4" r="1.5"/><circle cx="355.9" cy="296.7" r="1.5"/><circle cx="363.9" cy="298.4" r="1.5"/><circle cx="365.9" cy="299.2" r="1.5"/><circle cx="373.9" cy="352.2" r="1.5"/><circle cx="377.9" cy="354.3" r="1.5"/><circle cx="383.8" cy="277.5" r="1.5"/><circle cx="385.8" cy="275.3" r="1.5"/><circle cx="389.8" cy="272.3" r="1.5"/><circle cx="391.8" cy="273.8" r="1.5"/><circle cx="399.8" cy="269.8" r="1.5"/><circle cx="401.8" cy="270.7" r="1.5"/><circle cx="403.8" cy="272.2" r="1.5"/><circle cx="405.7" cy="274.0" r="1.5"/><circle cx="407.7" cy="275.7" r="1.5"/><circle cx="411.7" cy="274.0" r="1.5"/><circle cx="415.7" cy="269.4" r="1.5"/><circle cx="417.7" cy="267.1" r="1.5"/><circle cx="421.7" cy="264.0" r="1.5"/><circle cx="425.7" cy="265.3" r="1.5"/><circle cx="429.7" cy="268.1" r="1.5"/><circle cx="433.6" cy="269.7" r="1.5"/><circle cx="435.6" cy="270.0" r="1.5"/><circle cx="439.6" cy="269.8" r="1.5"/><circle cx="441.6" cy="269.3" r="1.5"/><circle cx="443.6" cy="268.8" r="1.5"/><circle cx="445.6" cy="268.1" r="1.5"/><circle cx="447.6" cy="267.3" r="1.5"/><circle cx="449.6" cy="266.4" r="1.5"/><circle cx="451.6" cy="267.3" r="1.5"/><circle cx="453.6" cy="269.3" r="1.5"/><circle cx="455.6" cy="270.0" r="1.5"/><circle cx="459.5" cy="271.0" r="1.5"/><circle cx="463.5" cy="273.0" r="1.5"/><circle cx="467.5" cy="272.4" r="1.5"/><circle cx="469.5" cy="271.4" r="1.5"/><circle cx="473.5" cy="273.4" r="1.5"/><circle cx="475.5" cy="275.8" r="1.5"/><circle cx="477.5" cy="277.6" r="1.5"/><circle cx="479.5" cy="279.2" r="1.5"/><circle cx="481.5" cy="281.0" r="1.5"/><circle cx="485.4" cy="282.5" r="1.5"/><circle cx="489.4" cy="282.5" r="1.5"/><circle cx="527.3" cy="324.1" r="1.5"/><circle cx="537.3" cy="243.4" r="1.5"/><circle cx="557.2" cy="225.8" r="1.5"/><circle cx="559.2" cy="224.2" r="1.5"/><circle cx="565.1" cy="222.9" r="1.5"/><circle cx="567.1" cy="222.1" r="1.5"/><circle cx="569.1" cy="221.7" r="1.5"/><circle cx="583.1" cy="218.2" r="1.5"/><circle cx="585.1" cy="216.8" r="1.5"/><circle cx="587.1" cy="214.2" r="1.5"/><circle cx="593.0" cy="212.2" r="1.5"/><circle cx="595.0" cy="213.5" r="1.5"/><circle cx="628.9" cy="217.4" r="1.5"/><circle cx="632.9" cy="212.9" r="1.5"/><circle cx="634.9" cy="213.3" r="1.5"/><circle cx="636.9" cy="213.2" r="1.5"/><circle cx="638.9" cy="212.9" r="1.5"/><circle cx="640.9" cy="212.2" r="1.5"/><circle cx="642.9" cy="211.5" r="1.5"/><circle cx="644.8" cy="210.2" r="1.5"/><circle cx="646.8" cy="208.7" r="1.5"/><circle cx="648.8" cy="207.6" r="1.5"/><circle cx="650.8" cy="207.6" r="1.5"/><circle cx="652.8" cy="208.4" r="1.5"/><circle cx="654.8" cy="209.4" r="1.5"/><circle cx="666.8" cy="208.0" r="1.5"/><circle cx="670.8" cy="207.9" r="1.5"/><circle cx="674.7" cy="208.8" r="1.5"/><circle cx="678.7" cy="209.7" r="1.5"/><circle cx="682.7" cy="209.8" r="1.5"/><circle cx="684.7" cy="209.6" r="1.5"/><circle cx="686.7" cy="208.5" r="1.5"/><circle cx="688.7" cy="206.9" r="1.5"/><circle cx="690.7" cy="205.4" r="1.5"/><circle cx="692.7" cy="205.2" r="1.5"/><circle cx="694.7" cy="206.0" r="1.5"/><circle cx="696.7" cy="207.4" r="1.5"/><circle cx="698.6" cy="208.3" r="1.5"/><circle cx="700.6" cy="208.3" r="1.5"/><circle cx="702.6" cy="208.0" r="1.5"/><circle cx="704.6" cy="207.4" r="1.5"/><circle cx="706.6" cy="206.9" r="1.5"/><circle cx="708.6" cy="206.3" r="1.5"/><circle cx="710.6" cy="206.0" r="1.5"/><circle cx="712.6" cy="206.0" r="1.5"/><circle cx="716.6" cy="206.0" r="1.5"/><circle cx="720.6" cy="206.0" r="1.5"/><circle cx="724.5" cy="206.0" r="1.5"/><circle cx="728.5" cy="205.7" r="1.5"/><circle cx="732.5" cy="205.1" r="1.5"/><circle cx="736.5" cy="205.0" r="1.5"/><circle cx="738.5" cy="205.2" r="1.5"/><circle cx="740.5" cy="205.5" r="1.5"/><circle cx="742.5" cy="205.8" r="1.5"/><circle cx="744.5" cy="206.0" r="1.5"/><circle cx="746.5" cy="206.0" r="1.5"/><circle cx="748.5" cy="206.0" r="1.5"/><circle cx="750.5" cy="206.0" r="1.5"/><circle cx="754.4" cy="205.7" r="1.5"/><circle cx="756.4" cy="205.4" r="1.5"/><circle cx="758.4" cy="205.1" r="1.5"/><circle cx="760.4" cy="204.8" r="1.5"/><circle cx="762.4" cy="204.5" r="1.5"/><circle cx="766.4" cy="204.4" r="1.5"/><circle cx="768.4" cy="204.5" r="1.5"/><circle cx="770.4" cy="204.7" r="1.5"/><circle cx="772.4" cy="204.8" r="1.5"/><circle cx="774.4" cy="205.0" r="1.5"/><circle cx="778.3" cy="205.0" r="1.5"/><circle cx="780.3" cy="205.0" r="1.5"/><circle cx="782.3" cy="204.9" r="1.5"/><circle cx="784.3" cy="204.9" r="1.5"/><circle cx="786.3" cy="204.8" r="1.5"/><circle cx="788.3" cy="204.7" r="1.5"/><circle cx="790.3" cy="204.5" r="1.5"/><circle cx="792.3" cy="204.3" r="1.5"/><circle cx="794.3" cy="204.1" r="1.5"/><circle cx="796.3" cy="203.9" r="1.5"/><circle cx="798.3" cy="203.7" r="1.5"/><circle cx="800.3" cy="203.6" r="1.5"/><circle cx="802.3" cy="203.6" r="1.5"/><circle cx="804.2" cy="203.6" r="1.5"/><circle cx="806.2" cy="203.6" r="1.5"/><circle cx="808.2" cy="203.7" r="1.5"/><circle cx="810.2" cy="203.8" r="1.5"/><circle cx="812.2" cy="203.8" r="1.5"/><circle cx="816.2" cy="203.8" r="1.5"/><circle cx="818.2" cy="203.7" r="1.5"/><circle cx="820.2" cy="203.7" r="1.5"/><circle cx="824.2" cy="203.9" r="1.5"/><circle cx="826.2" cy="204.2" r="1.5"/><circle cx="830.1" cy="204.7" r="1.5"/><circle cx="832.1" cy="204.9" r="1.5"/><circle cx="836.1" cy="205.3" r="1.5"/><circle cx="838.1" cy="205.5" r="1.5"/><circle cx="842.1" cy="206.0" r="1.5"/><circle cx="844.1" cy="206.3" r="1.5"/><circle cx="848.1" cy="205.9" r="1.5"/><circle cx="850.1" cy="205.5" r="1.5"/><circle cx="854.1" cy="204.5" r="1.5"/><circle cx="856.1" cy="203.9" r="1.5"/><circle cx="860.0" cy="203.5" r="1.5"/><circle cx="862.0" cy="203.4" r="1.5"/><circle cx="864.0" cy="203.3" r="1.5"/><circle cx="866.0" cy="203.2" r="1.5"/><circle cx="868.0" cy="203.2" r="1.5"/></g>
<polyline points="75.1,191.4 94.7,191.4 96.4,192.3 116.1,192.3 118.6,193.3 121.2,191.9 124.6,193.3 131.4,193.3 132.8,191.9 135.7,194.5 138.2,192.8 141.6,194.0 145.9,195.4 150.2,195.4 152.7,192.8 155.3,192.8 157.0,196.5 158.7,196.5 160.7,192.8 163.0,194.5 164.7,197.6 167.2,197.6 168.6,194.0 170.6,198.8 173.2,198.8 174.4,194.0 176.6,198.8 178.3,195.0 184.3,195.0 186.0,200.5 188.5,200.5 190.2,196.2 192.0,201.3 197.1,202.7 198.3,197.1 200.5,203.9 203.0,203.9 204.7,197.1 206.4,204.7 209.0,204.7 210.7,197.9 212.4,197.9 214.6,206.4 216.3,198.8 218.4,207.6 220.1,198.8 222.3,208.7 224.4,200.5 227.8,201.3 230.3,209.8 232.9,210.7 234.6,201.8 238.0,203.0 240.6,212.4 248.2,215.0 250.5,206.4 252.5,215.8 254.5,206.9 258.5,217.5 260.7,208.1 265.3,209.8 268.2,220.6 269.9,211.6 272.3,221.2 272.6,221.3 274.1,211.9 276.5,222.1 278.7,222.1 280.4,213.9 282.5,222.4 284.3,214.9 286.0,222.9 291.5,224.6 294.9,224.6 296.5,217.8 298.6,225.5 300.8,225.5 302.2,218.7 304.7,220.4 306.7,227.5 308.4,227.2 310.5,221.7 312.7,228.0 314.4,222.9 316.9,223.4 320.3,224.6 322.3,229.7 324.6,229.7 326.8,226.8 328.8,230.5 330.5,228.9 333.0,230.5 339.0,230.9 341.5,233.6 343.2,230.5 345.4,235.6 347.5,230.5 349.2,229.7 351.7,237.3 353.4,229.7 357.6,228.9 359.3,239.4 361.9,228.0 363.6,240.4 365.8,228.5 367.8,241.1 372.1,242.4 373.8,225.8 377.7,243.3 379.4,225.1 381.4,244.5 385.7,245.5 388.2,223.8 393.6,222.9 396.7,248.4 398.4,222.9 408.6,224.6 411.6,250.9 413.7,225.1 415.4,252.6 419.6,253.0 421.8,225.8 423.8,253.5 425.9,225.8 427.7,253.5 429.8,225.8 431.5,226.8 433.2,254.3 435.7,254.3 437.4,226.8 439.5,254.7 441.3,228.0 443.9,255.7 445.9,255.7 447.6,228.0 450.1,256.0 457.8,256.9 459.5,257.7 460.0,257.9 461.6,230.0 463.2,258.5 465.4,258.5 467.0,231.1 469.7,231.1 471.3,258.5 473.4,231.7 475.6,259.0 477.2,232.7 479.8,233.3 483.6,234.3 485.2,260.6 489.5,260.6 491.1,237.0 493.3,261.2 495.9,261.2 497.0,238.6 499.7,239.2 505.6,241.3 507.2,262.2 511.5,264.4 513.1,244.0 515.3,265.5 517.9,265.5 519.0,247.2 521.7,248.3 523.3,266.5 525.5,248.8 527.1,267.1 531.4,266.5 533.0,249.9 535.1,264.9 537.8,264.9 539.4,249.9 541.5,250.4 543.2,262.2 545.8,248.8 547.4,260.6 549.6,249.4 551.2,258.5 553.9,256.9 555.5,247.2 557.6,255.3 560.0,254.2 561.7,245.0 563.8,245.0 565.9,244.2 567.5,249.2 569.2,243.4 571.7,242.1 574.2,240.9 576.7,240.0 579.2,238.8 581.7,237.1 583.4,240.5 585.5,235.9 587.6,239.6 590.1,238.0 591.7,232.9 597.0,234.0 599.1,232.9 601.1,231.7 603.2,230.8 605.2,228.2 607.2,227.0 609.3,226.5 611.3,225.3 613.3,224.7 615.4,224.1 617.4,223.5 619.5,223.0 621.5,222.4 623.5,221.8 625.6,221.2 627.6,219.5 629.7,220.0 631.7,220.6 633.7,217.1 635.8,218.0 637.8,215.1 639.8,217.1 641.9,217.4 643.9,216.5 646.0,212.5 648.0,215.4 650.0,214.5 652.1,214.2 654.1,213.6 656.2,213.1 658.2,212.2 660.2,209.3 662.3,208.7 665.0,209.5 667.0,210.6 669.1,209.5 671.1,208.3 673.2,207.1 675.2,206.8 677.2,207.4 679.3,206.0 681.3,204.2 683.3,203.6 685.4,202.8 687.4,202.5 689.5,203.6 691.5,201.9 693.5,202.5 695.6,201.9 697.6,201.6 699.7,200.7 701.7,202.5 703.7,199.9 705.8,201.3 707.8,200.4 709.8,199.3 711.9,198.7 713.9,199.0 716.0,199.0 718.0,199.0 720.0,197.5 722.1,197.2 724.1,197.2 726.2,196.4 728.2,196.6 730.2,196.4 732.3,196.4 735.0,196.1 737.0,196.1 739.0,196.1 740.8,195.8 742.9,194.6 744.9,195.5 746.6,196.9 748.7,195.5 750.7,194.9 752.5,193.7 754.5,194.9 756.5,195.5 758.6,195.5 760.6,192.9 762.4,192.9 764.4,195.8 766.5,192.9 768.5,195.8 770.2,192.9 772.3,196.6 774.3,196.6 776.1,193.2 778.1,193.2 780.1,193.4 782.2,196.6 784.2,193.2 786.3,197.8 788.3,193.2 790.3,197.8 792.4,194.3 794.4,198.1 796.4,198.1 798.5,198.1 800.2,193.7 802.3,193.7 805.0,194.3 806.5,198.4 808.5,194.3 810.2,194.3 812.3,198.4 814.0,195.5 816.1,195.5 818.1,195.5 820.1,198.1 822.2,198.1 824.2,195.2 826.3,199.6 828.3,196.1 830.3,199.6 832.4,199.6 834.4,199.6 836.5,200.1 838.5,200.1 840.2,197.2 842.3,200.4 844.3,197.2 846.4,200.4 848.4,197.2 850.4,197.2 852.5,201.3 854.5,197.2 856.5,197.2 858.6,201.3 860.6,201.3 862.4,197.2 864.4,200.1 866.2,197.2 868.2,200.1 870.2,201.9" fill="none" stroke="#edb120" stroke-width="1.0" stroke-linejoin="round"/>
<g fill="#edb120"><circle cx="75.1" cy="191.4" r="1.6"/><circle cx="94.7" cy="191.4" r="1.6"/><circle cx="96.4" cy="192.3" r="1.6"/><circle cx="116.1" cy="192.3" r="1.6"/><circle cx="118.6" cy="193.3" r="1.6"/><circle cx="121.2" cy="191.9" r="1.6"/><circle cx="124.6" cy="193.3" r="1.6"/><circle cx="131.4" cy="193.3" r="1.6"/><circle cx="132.8" cy="191.9" r="1.6"/><circle cx="135.7" cy="194.5" r="1.6"/><circle cx="138.2" cy="192.8" r="1.6"/><circle cx="141.6" cy="194.0" r="1.6"/><circle cx="145.9" cy="195.4" r="1.6"/><circle cx="150.2" cy="195.4" r="1.6"/><circle cx="152.7" cy="192.8" r="1.6"/><circle cx="155.3" cy="192.8" r="1.6"/><circle cx="157.0" cy="196.5" r="1.6"/><circle cx="158.7" cy="196.5" r="1.6"/><circle cx="160.7" cy="192.8" r="1.6"/><circle cx="163.0" cy="194.5" r="1.6"/><circle cx="164.7" cy="197.6" r="1.6"/><circle cx="167.2" cy="197.6" r="1.6"/><circle cx="168.6" cy="194.0" r="1.6"/><circle cx="170.6" cy="198.8" r="1.6"/><circle cx="173.2" cy="198.8" r="1.6"/><circle cx="174.4" cy="194.0" r="1.6"/><circle cx="176.6" cy="198.8" r="1.6"/><circle cx="178.3" cy="195.0" r="1.6"/><circle cx="184.3" cy="195.0" r="1.6"/><circle cx="186.0" cy="200.5" r="1.6"/><circle cx="188.5" cy="200.5" r="1.6"/><circle cx="190.2" cy="196.2" r="1.6"/><circle cx="192.0" cy="201.3" r="1.6"/><circle cx="197.1" cy="202.7" r="1.6"/><circle cx="198.3" cy="197.1" r="1.6"/><circle cx="200.5" cy="203.9" r="1.6"/><circle cx="203.0" cy="203.9" r="1.6"/><circle cx="204.7" cy="197.1" r="1.6"/><circle cx="206.4" cy="204.7" r="1.6"/><circle cx="209.0" cy="204.7" r="1.6"/><circle cx="210.7" cy="197.9" r="1.6"/><circle cx="212.4" cy="197.9" r="1.6"/><circle cx="214.6" cy="206.4" r="1.6"/><circle cx="216.3" cy="198.8" r="1.6"/><circle cx="218.4" cy="207.6" r="1.6"/><circle cx="220.1" cy="198.8" r="1.6"/><circle cx="222.3" cy="208.7" r="1.6"/><circle cx="224.4" cy="200.5" r="1.6"/><circle cx="227.8" cy="201.3" r="1.6"/><circle cx="230.3" cy="209.8" r="1.6"/><circle cx="232.9" cy="210.7" r="1.6"/><circle cx="234.6" cy="201.8" r="1.6"/><circle cx="238.0" cy="203.0" r="1.6"/><circle cx="240.6" cy="212.4" r="1.6"/><circle cx="248.2" cy="215.0" r="1.6"/><circle cx="250.5" cy="206.4" r="1.6"/><circle cx="252.5" cy="215.8" r="1.6"/><circle cx="254.5" cy="206.9" r="1.6"/><circle cx="258.5" cy="217.5" r="1.6"/><circle cx="260.7" cy="208.1" r="1.6"/><circle cx="265.3" cy="209.8" r="1.6"/><circle cx="268.2" cy="220.6" r="1.6"/><circle cx="269.9" cy="211.6" r="1.6"/><circle cx="272.3" cy="221.2" r="1.6"/><circle cx="272.6" cy="221.3" r="1.6"/><circle cx="274.1" cy="211.9" r="1.6"/><circle cx="276.5" cy="222.1" r="1.6"/><circle cx="278.7" cy="222.1" r="1.6"/><circle cx="280.4" cy="213.9" r="1.6"/><circle cx="282.5" cy="222.4" r="1.6"/><circle cx="284.3" cy="214.9" r="1.6"/><circle cx="286.0" cy="222.9" r="1.6"/><circle cx="291.5" cy="224.6" r="1.6"/><circle cx="294.9" cy="224.6" r="1.6"/><circle cx="296.5" cy="217.8" r="1.6"/><circle cx="298.6" cy="225.5" r="1.6"/><circle cx="300.8" cy="225.5" r="1.6"/><circle cx="302.2" cy="218.7" r="1.6"/><circle cx="304.7" cy="220.4" r="1.6"/><circle cx="306.7" cy="227.5" r="1.6"/><circle cx="308.4" cy="227.2" r="1.6"/><circle cx="310.5" cy="221.7" r="1.6"/><circle cx="312.7" cy="228.0" r="1.6"/><circle cx="314.4" cy="222.9" r="1.6"/><circle cx="316.9" cy="223.4" r="1.6"/><circle cx="320.3" cy="224.6" r="1.6"/><circle cx="322.3" cy="229.7" r="1.6"/><circle cx="324.6" cy="229.7" r="1.6"/><circle cx="326.8" cy="226.8" r="1.6"/><circle cx="328.8" cy="230.5" r="1.6"/><circle cx="330.5" cy="228.9" r="1.6"/><circle cx="333.0" cy="230.5" r="1.6"/><circle cx="339.0" cy="230.9" r="1.6"/><circle cx="341.5" cy="233.6" r="1.6"/><circle cx="343.2" cy="230.5" r="1.6"/><circle cx="345.4" cy="235.6" r="1.6"/><circle cx="347.5" cy="230.5" r="1.6"/><circle cx="349.2" cy="229.7" r="1.6"/><circle cx="351.7" cy="237.3" r="1.6"/><circle cx="353.4" cy="229.7" r="1.6"/><circle cx="357.6" cy="228.9" r="1.6"/><circle cx="359.3" cy="239.4" r="1.6"/><circle cx="361.9" cy="228.0" r="1.6"/><circle cx="363.6" cy="240.4" r="1.6"/><circle cx="365.8" cy="228.5" r="1.6"/><circle cx="367.8" cy="241.1" r="1.6"/><circle cx="372.1" cy="242.4" r="1.6"/><circle cx="373.8" cy="225.8" r="1.6"/><circle cx="377.7" cy="243.3" r="1.6"/><circle cx="379.4" cy="225.1" r="1.6"/><circle cx="381.4" cy="244.5" r="1.6"/><circle cx="385.7" cy="245.5" r="1.6"/><circle cx="388.2" cy="223.8" r="1.6"/><circle cx="393.6" cy="222.9" r="1.6"/><circle cx="396.7" cy="248.4" r="1.6"/><circle cx="398.4" cy="222.9" r="1.6"/><circle cx="408.6" cy="224.6" r="1.6"/><circle cx="411.6" cy="250.9" r="1.6"/><circle cx="413.7" cy="225.1" r="1.6"/><circle cx="415.4" cy="252.6" r="1.6"/><circle cx="419.6" cy="253.0" r="1.6"/><circle cx="421.8" cy="225.8" r="1.6"/><circle cx="423.8" cy="253.5" r="1.6"/><circle cx="425.9" cy="225.8" r="1.6"/><circle cx="427.7" cy="253.5" r="1.6"/><circle cx="429.8" cy="225.8" r="1.6"/><circle cx="431.5" cy="226.8" r="1.6"/><circle cx="433.2" cy="254.3" r="1.6"/><circle cx="435.7" cy="254.3" r="1.6"/><circle cx="437.4" cy="226.8" r="1.6"/><circle cx="439.5" cy="254.7" r="1.6"/><circle cx="441.3" cy="228.0" r="1.6"/><circle cx="443.9" cy="255.7" r="1.6"/><circle cx="445.9" cy="255.7" r="1.6"/><circle cx="447.6" cy="228.0" r="1.6"/><circle cx="450.1" cy="256.0" r="1.6"/><circle cx="457.8" cy="256.9" r="1.6"/><circle cx="459.5" cy="257.7" r="1.6"/><circle cx="460.0" cy="257.9" r="1.6"/><circle cx="461.6" cy="230.0" r="1.6"/><circle cx="463.2" cy="258.5" r="1.6"/><circle cx="465.4" cy="258.5" r="1.6"/><circle cx="467.0" cy="231.1" r="1.6"/><circle cx="469.7" cy="231.1" r="1.6"/><circle cx="471.3" cy="258.5" r="1.6"/><circle cx="473.4" cy="231.7" r="1.6"/><circle cx="475.6" cy="259.0" r="1.6"/><circle cx="477.2" cy="232.7" r="1.6"/><circle cx="479.8" cy="233.3" r="1.6"/><circle cx="483.6" cy="234.3" r="1.6"/><circle cx="485.2" cy="260.6" r="1.6"/><circle cx="489.5" cy="260.6" r="1.6"/><circle cx="491.1" cy="237.0" r="1.6"/><circle cx="493.3" cy="261.2" r="1.6"/><circle cx="495.9" cy="261.2" r="1.6"/><circle cx="497.0" cy="238.6" r="1.6"/><circle cx="499.7" cy="239.2" r="1.6"/><circle cx="505.6" cy="241.3" r="1.6"/><circle cx="507.2" cy="262.2" r="1.6"/><circle cx="511.5" cy="264.4" r="1.6"/><circle cx="513.1" cy="244.0" r="1.6"/><circle cx="515.3" cy="265.5" r="1.6"/><circle cx="517.9" cy="265.5" r="1.6"/><circle cx="519.0" cy="247.2" r="1.6"/><circle cx="521.7" cy="248.3" r="1.6"/><circle cx="523.3" cy="266.5" r="1.6"/><circle cx="525.5" cy="248.8" r="1.6"/><circle cx="527.1" cy="267.1" r="1.6"/><circle cx="531.4" cy="266.5" r="1.6"/><circle cx="533.0" cy="249.9" r="1.6"/><circle cx="535.1" cy="264.9" r="1.6"/><circle cx="537.8" cy="264.9" r="1.6"/><circle cx="539.4" cy="249.9" r="1.6"/><circle cx="541.5" cy="250.4" r="1.6"/><circle cx="543.2" cy="262.2" r="1.6"/><circle cx="545.8" cy="248.8" r="1.6"/><circle cx="547.4" cy="260.6" r="1.6"/><circle cx="549.6" cy="249.4" r="1.6"/><circle cx="551.2" cy="258.5" r="1.6"/><circle cx="553.9" cy="256.9" r="1.6"/><circle cx="555.5" cy="247.2" r="1.6"/><circle cx="557.6" cy="255.3" r="1.6"/><circle cx="560.0" cy="254.2" r="1.6"/><circle cx="561.7" cy="245.0" r="1.6"/><circle cx="563.8" cy="245.0" r="1.6"/><circle cx="565.9" cy="244.2" r="1.6"/><circle cx="567.5" cy="249.2" r="1.6"/><circle cx="569.2" cy="243.4" r="1.6"/><circle cx="571.7" cy="242.1" r="1.6"/><circle cx="574.2" cy="240.9" r="1.6"/><circle cx="576.7" cy="240.0" r="1.6"/><circle cx="579.2" cy="238.8" r="1.6"/><circle cx="581.7" cy="237.1" r="1.6"/><circle cx="583.4" cy="240.5" r="1.6"/><circle cx="585.5" cy="235.9" r="1.6"/><circle cx="587.6" cy="239.6" r="1.6"/><circle cx="590.1" cy="238.0" r="1.6"/><circle cx="591.7" cy="232.9" r="1.6"/><circle cx="597.0" cy="234.0" r="1.6"/><circle cx="599.1" cy="232.9" r="1.6"/><circle cx="601.1" cy="231.7" r="1.6"/><circle cx="603.2" cy="230.8" r="1.6"/><circle cx="605.2" cy="228.2" r="1.6"/><circle cx="607.2" cy="227.0" r="1.6"/><circle cx="609.3" cy="226.5" r="1.6"/><circle cx="611.3" cy="225.3" r="1.6"/><circle cx="613.3" cy="224.7" r="1.6"/><circle cx="615.4" cy="224.1" r="1.6"/><circle cx="617.4" cy="223.5" r="1.6"/><circle cx="619.5" cy="223.0" r="1.6"/><circle cx="621.5" cy="222.4" r="1.6"/><circle cx="623.5" cy="221.8" r="1.6"/><circle cx="625.6" cy="221.2" r="1.6"/><circle cx="627.6" cy="219.5" r="1.6"/><circle cx="629.7" cy="220.0" r="1.6"/><circle cx="631.7" cy="220.6" r="1.6"/><circle cx="633.7" cy="217.1" r="1.6"/><circle cx="635.8" cy="218.0" r="1.6"/><circle cx="637.8" cy="215.1" r="1.6"/><circle cx="639.8" cy="217.1" r="1.6"/><circle cx="641.9" cy="217.4" r="1.6"/><circle cx="643.9" cy="216.5" r="1.6"/><circle cx="646.0" cy="212.5" r="1.6"/><circle cx="648.0" cy="215.4" r="1.6"/><circle cx="650.0" cy="214.5" r="1.6"/><circle cx="652.1" cy="214.2" r="1.6"/><circle cx="654.1" cy="213.6" r="1.6"/><circle cx="656.2" cy="213.1" r="1.6"/><circle cx="658.2" cy="212.2" r="1.6"/><circle cx="660.2" cy="209.3" r="1.6"/><circle cx="662.3" cy="208.7" r="1.6"/><circle cx="665.0" cy="209.5" r="1.6"/><circle cx="667.0" cy="210.6" r="1.6"/><circle cx="669.1" cy="209.5" r="1.6"/><circle cx="671.1" cy="208.3" r="1.6"/><circle cx="673.2" cy="207.1" r="1.6"/><circle cx="675.2" cy="206.8" r="1.6"/><circle cx="677.2" cy="207.4" r="1.6"/><circle cx="679.3" cy="206.0" r="1.6"/><circle cx="681.3" cy="204.2" r="1.6"/><circle cx="683.3" cy="203.6" r="1.6"/><circle cx="685.4" cy="202.8" r="1.6"/><circle cx="687.4" cy="202.5" r="1.6"/><circle cx="689.5" cy="203.6" r="1.6"/><circle cx="691.5" cy="201.9" r="1.6"/><circle cx="693.5" cy="202.5" r="1.6"/><circle cx="695.6" cy="201.9" r="1.6"/><circle cx="697.6" cy="201.6" r="1.6"/><circle cx="699.7" cy="200.7" r="1.6"/><circle cx="701.7" cy="202.5" r="1.6"/><circle cx="703.7" cy="199.9" r="1.6"/><circle cx="705.8" cy="201.3" r="1.6"/><circle cx="707.8" cy="200.4" r="1.6"/><circle cx="709.8" cy="199.3" r="1.6"/><circle cx="711.9" cy="198.7" r="1.6"/><circle cx="713.9" cy="199.0" r="1.6"/><circle cx="716.0" cy="199.0" r="1.6"/><circle cx="718.0" cy="199.0" r="1.6"/><circle cx="720.0" cy="197.5" r="1.6"/><circle cx="722.1" cy="197.2" r="1.6"/><circle cx="724.1" cy="197.2" r="1.6"/><circle cx="726.2" cy="196.4" r="1.6"/><circle cx="728.2" cy="196.6" r="1.6"/><circle cx="730.2" cy="196.4" r="1.6"/><circle cx="732.3" cy="196.4" r="1.6"/><circle cx="735.0" cy="196.1" r="1.6"/><circle cx="737.0" cy="196.1" r="1.6"/><circle cx="739.0" cy="196.1" r="1.6"/><circle cx="740.8" cy="195.8" r="1.6"/><circle cx="742.9" cy="194.6" r="1.6"/><circle cx="744.9" cy="195.5" r="1.6"/><circle cx="746.6" cy="196.9" r="1.6"/><circle cx="748.7" cy="195.5" r="1.6"/><circle cx="750.7" cy="194.9" r="1.6"/><circle cx="752.5" cy="193.7" r="1.6"/><circle cx="754.5" cy="194.9" r="1.6"/><circle cx="756.5" cy="195.5" r="1.6"/><circle cx="758.6" cy="195.5" r="1.6"/><circle cx="760.6" cy="192.9" r="1.6"/><circle cx="762.4" cy="192.9" r="1.6"/><circle cx="764.4" cy="195.8" r="1.6"/><circle cx="766.5" cy="192.9" r="1.6"/><circle cx="768.5" cy="195.8" r="1.6"/><circle cx="770.2" cy="192.9" r="1.6"/><circle cx="772.3" cy="196.6" r="1.6"/><circle cx="774.3" cy="196.6" r="1.6"/><circle cx="776.1" cy="193.2" r="1.6"/><circle cx="778.1" cy="193.2" r="1.6"/><circle cx="780.1" cy="193.4" r="1.6"/><circle cx="782.2" cy="196.6" r="1.6"/><circle cx="784.2" cy="193.2" r="1.6"/><circle cx="786.3" cy="197.8" r="1.6"/><circle cx="788.3" cy="193.2" r="1.6"/><circle cx="790.3" cy="197.8" r="1.6"/><circle cx="792.4" cy="194.3" r="1.6"/><circle cx="794.4" cy="198.1" r="1.6"/><circle cx="796.4" cy="198.1" r="1.6"/><circle cx="798.5" cy="198.1" r="1.6"/><circle cx="800.2" cy="193.7" r="1.6"/><circle cx="802.3" cy="193.7" r="1.6"/><circle cx="805.0" cy="194.3" r="1.6"/><circle cx="806.5" cy="198.4" r="1.6"/><circle cx="808.5" cy="194.3" r="1.6"/><circle cx="810.2" cy="194.3" r="1.6"/><circle cx="812.3" cy="198.4" r="1.6"/><circle cx="814.0" cy="195.5" r="1.6"/><circle cx="816.1" cy="195.5" r="1.6"/><circle cx="818.1" cy="195.5" r="1.6"/><circle cx="820.1" cy="198.1" r="1.6"/><circle cx="822.2" cy="198.1" r="1.6"/><circle cx="824.2" cy="195.2" r="1.6"/><circle cx="826.3" cy="199.6" r="1.6"/><circle cx="828.3" cy="196.1" r="1.6"/><circle cx="830.3" cy="199.6" r="1.6"/><circle cx="832.4" cy="199.6" r="1.6"/><circle cx="834.4" cy="199.6" r="1.6"/><circle cx="836.5" cy="200.1" r="1.6"/><circle cx="838.5" cy="200.1" r="1.6"/><circle cx="840.2" cy="197.2" r="1.6"/><circle cx="842.3" cy="200.4" r="1.6"/><circle cx="844.3" cy="197.2" r="1.6"/><circle cx="846.4" cy="200.4" r="1.6"/><circle cx="848.4" cy="197.2" r="1.6"/><circle cx="850.4" cy="197.2" r="1.6"/><circle cx="852.5" cy="201.3" r="1.6"/><circle cx="854.5" cy="197.2" r="1.6"/><circle cx="856.5" cy="197.2" r="1.6"/><circle cx="858.6" cy="201.3" r="1.6"/><circle cx="860.6" cy="201.3" r="1.6"/><circle cx="862.4" cy="197.2" r="1.6"/><circle cx="864.4" cy="200.1" r="1.6"/><circle cx="866.2" cy="197.2" r="1.6"/><circle cx="868.2" cy="200.1" r="1.6"/><circle cx="870.2" cy="201.9" r="1.6"/><circle cx="77.0" cy="191.4" r="1.6"/><circle cx="79.0" cy="191.4" r="1.6"/><circle cx="81.0" cy="191.4" r="1.6"/><circle cx="83.0" cy="191.4" r="1.6"/><circle cx="85.0" cy="191.4" r="1.6"/><circle cx="86.9" cy="191.4" r="1.6"/><circle cx="88.9" cy="191.4" r="1.6"/><circle cx="90.9" cy="191.4" r="1.6"/><circle cx="92.9" cy="191.4" r="1.6"/><circle cx="98.9" cy="192.3" r="1.6"/><circle cx="100.9" cy="192.3" r="1.6"/><circle cx="102.9" cy="192.3" r="1.6"/><circle cx="104.9" cy="192.3" r="1.6"/><circle cx="106.9" cy="192.3" r="1.6"/><circle cx="108.9" cy="192.3" r="1.6"/><circle cx="110.9" cy="192.3" r="1.6"/><circle cx="112.8" cy="192.3" r="1.6"/><circle cx="114.8" cy="192.3" r="1.6"/><circle cx="116.8" cy="192.6" r="1.6"/><circle cx="122.8" cy="192.6" r="1.6"/><circle cx="126.8" cy="193.3" r="1.6"/><circle cx="128.8" cy="193.3" r="1.6"/><circle cx="134.8" cy="193.7" r="1.6"/><circle cx="136.8" cy="193.8" r="1.6"/><circle cx="140.7" cy="193.7" r="1.6"/><circle cx="142.7" cy="194.4" r="1.6"/><circle cx="144.7" cy="195.0" r="1.6"/><circle cx="146.7" cy="195.4" r="1.6"/><circle cx="148.7" cy="195.4" r="1.6"/><circle cx="180.6" cy="195.0" r="1.6"/><circle cx="182.6" cy="195.0" r="1.6"/><circle cx="194.5" cy="202.0" r="1.6"/><circle cx="226.4" cy="201.0" r="1.6"/><circle cx="236.4" cy="202.4" r="1.6"/><circle cx="242.4" cy="213.0" r="1.6"/><circle cx="244.4" cy="213.7" r="1.6"/><circle cx="246.3" cy="214.4" r="1.6"/><circle cx="262.3" cy="208.7" r="1.6"/><circle cx="264.3" cy="209.4" r="1.6"/><circle cx="288.2" cy="223.6" r="1.6"/><circle cx="290.2" cy="224.2" r="1.6"/><circle cx="294.2" cy="224.6" r="1.6"/><circle cx="316.1" cy="223.2" r="1.6"/><circle cx="318.1" cy="223.8" r="1.6"/><circle cx="326.0" cy="227.8" r="1.6"/><circle cx="328.0" cy="229.1" r="1.6"/><circle cx="332.0" cy="229.9" r="1.6"/><circle cx="334.0" cy="230.6" r="1.6"/><circle cx="336.0" cy="230.7" r="1.6"/><circle cx="338.0" cy="230.8" r="1.6"/><circle cx="340.0" cy="232.0" r="1.6"/><circle cx="355.9" cy="229.2" r="1.6"/><circle cx="369.9" cy="241.7" r="1.6"/><circle cx="383.8" cy="245.1" r="1.6"/><circle cx="389.8" cy="223.5" r="1.6"/><circle cx="391.8" cy="223.2" r="1.6"/><circle cx="399.8" cy="223.1" r="1.6"/><circle cx="401.8" cy="223.5" r="1.6"/><circle cx="403.8" cy="223.8" r="1.6"/><circle cx="405.7" cy="224.1" r="1.6"/><circle cx="407.7" cy="224.5" r="1.6"/><circle cx="417.7" cy="252.8" r="1.6"/><circle cx="451.6" cy="256.2" r="1.6"/><circle cx="453.6" cy="256.4" r="1.6"/><circle cx="455.6" cy="256.6" r="1.6"/><circle cx="481.5" cy="233.7" r="1.6"/><circle cx="487.4" cy="260.6" r="1.6"/><circle cx="501.4" cy="239.8" r="1.6"/><circle cx="503.4" cy="240.5" r="1.6"/><circle cx="509.4" cy="263.3" r="1.6"/><circle cx="529.3" cy="266.8" r="1.6"/><circle cx="553.2" cy="257.3" r="1.6"/><circle cx="559.2" cy="254.6" r="1.6"/><circle cx="565.1" cy="244.5" r="1.6"/><circle cx="573.1" cy="241.4" r="1.6"/><circle cx="575.1" cy="240.6" r="1.6"/><circle cx="589.1" cy="238.7" r="1.6"/><circle cx="593.0" cy="233.2" r="1.6"/><circle cx="595.0" cy="233.6" r="1.6"/><circle cx="628.9" cy="219.8" r="1.6"/><circle cx="630.9" cy="220.4" r="1.6"/><circle cx="632.9" cy="218.5" r="1.6"/><circle cx="634.9" cy="217.6" r="1.6"/><circle cx="636.9" cy="216.4" r="1.6"/><circle cx="638.9" cy="216.2" r="1.6"/><circle cx="640.9" cy="217.3" r="1.6"/><circle cx="642.9" cy="217.0" r="1.6"/><circle cx="644.8" cy="214.7" r="1.6"/><circle cx="646.8" cy="213.7" r="1.6"/><circle cx="648.8" cy="215.0" r="1.6"/><circle cx="650.8" cy="214.4" r="1.6"/><circle cx="652.8" cy="214.0" r="1.6"/><circle cx="654.8" cy="213.4" r="1.6"/><circle cx="684.7" cy="203.1" r="1.6"/><circle cx="686.7" cy="202.6" r="1.6"/><circle cx="688.7" cy="203.2" r="1.6"/><circle cx="690.7" cy="202.6" r="1.6"/><circle cx="692.7" cy="202.3" r="1.6"/><circle cx="694.7" cy="202.2" r="1.6"/><circle cx="696.7" cy="201.7" r="1.6"/><circle cx="698.6" cy="201.2" r="1.6"/><circle cx="700.6" cy="201.5" r="1.6"/><circle cx="702.6" cy="201.3" r="1.6"/><circle cx="704.6" cy="200.5" r="1.6"/><circle cx="706.6" cy="200.9" r="1.6"/><circle cx="708.6" cy="200.0" r="1.6"/><circle cx="710.6" cy="199.1" r="1.6"/><circle cx="804.2" cy="194.1" r="1.6"/></g>
<path d="M267.5,272.1L277.5,272.1M269.5,269.1L275.5,275.1M272.5,267.1L272.5,277.1M275.5,269.1L269.5,275.1" stroke="#a2142f" stroke-width="1.4" fill="none"/>
<path d="M466.2,262.2L476.2,262.2M468.2,259.2L474.2,265.2M471.2,257.2L471.2,267.2M474.2,259.2L468.2,265.2" stroke="#a2142f" stroke-width="1.4" fill="none"/>
<path d="M665.5,205.3L675.5,205.3M667.5,202.3L673.5,208.3M670.5,200.3L670.5,210.3M673.5,202.3L667.5,208.3" stroke="#a2142f" stroke-width="1.4" fill="none"/>
<path d="M865.0,203.5L875.0,203.5M867.0,200.5L873.0,206.5M870.0,198.5L870.0,208.5M873.0,200.5L867.0,206.5" stroke="#a2142f" stroke-width="1.4" fill="none"/>
<g font-family="Liberation Sans" font-size="12" fill="#262626"><text x="68.5" y="124.3" text-anchor="end">200</text><text x="68.5" y="195.5" text-anchor="end">0</text><text x="68.5" y="266.7" text-anchor="end">-200</text><text x="68.5" y="338.0" text-anchor="end">-400</text><text x="68.5" y="409.2" text-anchor="end">-600</text><text x="68.5" y="480.4" text-anchor="end">-800</text><text x="68.5" y="551.6" text-anchor="end">-1000</text><text x="68.5" y="622.9" text-anchor="end">-1200</text><text x="68.5" y="694.1" text-anchor="end">-1400</text><text x="68.5" y="765.3" text-anchor="end">-1600</text><text x="73.0" y="777" text-anchor="middle">0</text><text x="172.6" y="777" text-anchor="middle">50</text><text x="272.2" y="777" text-anchor="middle">100</text><text x="371.9" y="777" text-anchor="middle">150</text><text x="471.5" y="777" text-anchor="middle">200</text><text x="571.1" y="777" text-anchor="middle">250</text><text x="670.8" y="777" text-anchor="middle">300</text><text x="770.4" y="777" text-anchor="middle">350</text><text x="870.0" y="777" text-anchor="middle">400</text></g>
<text x="472.5" y="791.7" text-anchor="middle" font-family="Liberation Sans" font-size="13" fill="#262626">Episode Number</text>
<text transform="translate(32.4,444.6) rotate(-90)" text-anchor="middle" font-family="Liberation Sans" font-size="13" fill="#262626">Episode Reward</text>
</svg>
<!-- right panel header -->
<div class="a" style="left:900px;top:59px;width:1px;height:779px;background:#808080"></div>
<div class="a" style="left:901px;top:59px;width:300px;height:23px;background:#fff;border-bottom:1px solid #bdbdbd"></div>
<div class="t" style="left:907px;top:64px;font-size:13px;color:#1a1a1a">Training Progress</div>

<!-- progress -->
<div class="a" style="left:911px;top:97px;width:160px;height:15px;background:#fff"></div>
<div class="a" style="left:911px;top:97px;width:12px;height:15px;background:#2a8ae0"></div>
<div class="a" style="left:1081px;top:92px;width:110px;height:25px;border:1px solid #c8c8c8;border-radius:4px;background:#f3f3f3"></div>
<div class="t" style="left:1081px;top:97px;width:110px;text-align:center;color:#a3a3a3">Training stopped</div>
<div class="t" style="left:911px;top:128px">Episode number:</div>
<div class="t" style="left:1041px;top:128px">400/5000</div>
<div class="t" style="left:911px;top:153px">Start time:</div>
<div class="t" style="left:1041px;top:153px">13-Oct-2024 18:11:00</div>
<div class="t" style="left:911px;top:178px">Duration:</div>
<div class="t" style="left:1041px;top:178px">00:02:04</div>
<div class="t" style="left:911px;top:203px">Final result:</div>
<div class="t" style="left:1041px;top:203px;line-height:14.7px">Training finished after all<br>agents reached stop<br>training criteria.</div>
<!-- training information panel -->
<div class="a" style="left:911px;top:258px;width:280px;height:295px;border:1px solid #8f8f8f"></div>
<div class="a" style="left:912px;top:278px;width:278px;height:1px;background:#8f8f8f"></div>
<div class="t" style="left:915px;top:261px;font-weight:bold">Training Information</div>
<div class="a" style="left:922px;top:289px;width:258px;height:95px;border:1px solid #8a8a8a;background:#fff"></div>
<div class="a" style="left:923px;top:290px;width:256px;height:26px;background:#f3f3f3;border-bottom:1px solid #8a8a8a"></div>
<div class="a" style="left:923px;top:317px;width:256px;height:22px;background:#2a8ae0;border-bottom:1px solid #8a8a8a"></div>
<div class="a" style="left:1051px;top:290px;width:1px;height:49px;background:#8a8a8a"></div>
<div class="t" style="left:926px;top:297px;font-weight:bold">Agent</div>
<div class="t" style="left:1055px;top:297px;font-weight:bold">Status</div>
<div class="t" style="left:926px;top:320px;color:#fff">rlPGAgent</div>
<div class="t" style="left:1055px;top:320px;color:#fff">Training finished</div>
<div class="t" style="left:922px;top:395px;font-weight:bold">Episode Information (rlPGAgent):</div>
<div class="t" style="left:922px;top:420px">Episode reward:</div>
<div class="t" style="left:1042px;top:420px">-38.3733</div>
<div class="t" style="left:922px;top:445px">Average reward:</div>
<div class="t" style="left:1042px;top:445px">-36.2278</div>
<div class="t" style="left:922px;top:470px">Episode Q0:</div>
<div class="t" style="left:1042px;top:470px">-25.6137</div>
<div class="t" style="left:922px;top:495px">Evaluation statistic:</div>
<div class="t" style="left:1042px;top:495px">-35.1466</div>
<div class="a" style="left:1070px;top:519px;width:110px;height:23px;border:1px solid #7a7a7a;border-radius:4px;background:#f7f7f7"></div>
<div class="t" style="left:1070px;top:522px;width:110px;text-align:center">More Details...</div>
<!-- plot options -->
<div class="a" style="left:911px;top:563px;width:280px;height:118px;border:1px solid #8f8f8f"></div>
<div class="a" style="left:912px;top:583px;width:278px;height:1px;background:#8f8f8f"></div>
<div class="t" style="left:915px;top:566px;font-weight:bold">Plot Options</div>
<div class="a" style="left:922px;top:595px;width:14px;height:14px;border:1px solid #5a5a5a;background:#fff"></div>
<svg class="a" style="left:922px;top:595px" width="14" height="14" viewBox="0 0 14 14"><path d="M3 7.2L5.7 10L11 3.6" stroke="#1a1a1a" stroke-width="1.9" fill="none"/></svg>
<div class="t" style="left:939px;top:595px">Show EpisodeQ0</div>
<div class="a" style="left:922px;top:622px;width:14px;height:14px;border:1px solid #5a5a5a;background:#fff"></div>
<svg class="a" style="left:922px;top:622px" width="14" height="14" viewBox="0 0 14 14"><path d="M3 7.2L5.7 10L11 3.6" stroke="#1a1a1a" stroke-width="1.9" fill="none"/></svg>
<div class="t" style="left:939px;top:622px">Show evaluation statistic</div>
<div class="a" style="left:922px;top:652px;width:14px;height:14px;border:1px solid #5a5a5a;background:#fff"></div>
<div class="t" style="left:939px;top:651px">Show last N episodes</div>
<div class="a" style="left:1066px;top:647px;width:114px;height:23px;border:1px solid #d0d0d0;background:#f7f7f7"></div>
<div class="t" style="left:1066px;top:652px;width:109px;text-align:right;color:#9c9c9c">5000</div>
<!-- legend -->
<div class="a" style="left:911px;top:691px;width:280px;height:102px;border:1px solid #8f8f8f"></div>
<div class="a" style="left:917px;top:697px;width:268px;height:90px;background:#fff"></div>
<svg class="a" style="left:960px;top:695px" width="60" height="90" viewBox="0 0 60 90">
<path d="M13 9.5H53" stroke="#4dbeee" stroke-width="1"/><circle cx="33.5" cy="9.5" r="1.4" fill="#4dbeee"/>
<path d="M13 28.5H53" stroke="#0072bd" stroke-width="1.2"/><circle cx="33.5" cy="28.5" r="1.6" fill="#0072bd"/>
<path d="M13 47.5H53" stroke="#edb120" stroke-width="1.2"/><circle cx="33.5" cy="47.5" r="1.4" fill="#edb120"/>
<path d="M28.5 75.5h10M33.5 70.5v10M30 72l7 7M37 72l-7 7" stroke="#a2142f" stroke-width="1"/>
</svg>
<div class="t" style="left:1017px;top:698px;font-size:10.7px;line-height:13px">Episode reward</div>
<div class="t" style="left:1017px;top:717px;font-size:10.7px;line-height:13px">Average reward</div>
<div class="t" style="left:1017px;top:736px;font-size:10.7px;line-height:13px">Episode Q0</div>
<div class="t" style="left:1017px;top:759px;font-size:10.7px;line-height:12px">Evaluation statistic<br>(MeanEpisodeReward)</div>
<!-- header dots -->
<div class="a" style="left:878px;top:65px;width:2px;height:2px;background:#5c5c5c;box-shadow:0 4px 0 #5c5c5c,0 8px 0 #5c5c5c"></div>
<div class="a" style="left:1182px;top:65px;width:2px;height:2px;background:#5c5c5c;box-shadow:0 4px 0 #5c5c5c,0 8px 0 #5c5c5c"></div>
<!-- tab handle -->
<div class="a" style="left:7px;top:66px;width:5px;height:1px;background:#8c8c8c;box-shadow:0 2px 0 #8c8c8c,0 4px 0 #8c8c8c,0 6px 0 #8c8c8c"></div>

<!-- status bar -->
<div class="a" style="left:1px;top:815px;width:1200px;height:23px;background:#e6e6e6;border-top:1px solid #858585"></div>
<div class="a" style="left:901px;top:815px;width:300px;height:1px;background:#bababa"></div>
<div class="a" style="left:900px;top:815px;width:1px;height:23px;background:#808080"></div>
<!-- status bar icon -->
<svg class="a" style="left:1183px;top:819px" width="16" height="16" viewBox="0 0 16 16"><path d="M3 2L9.7 8L3 14Z" fill="#8f8f8f"/><rect x="10" y="2" width="2" height="12" fill="#8f8f8f"/></svg>
</body></html>
